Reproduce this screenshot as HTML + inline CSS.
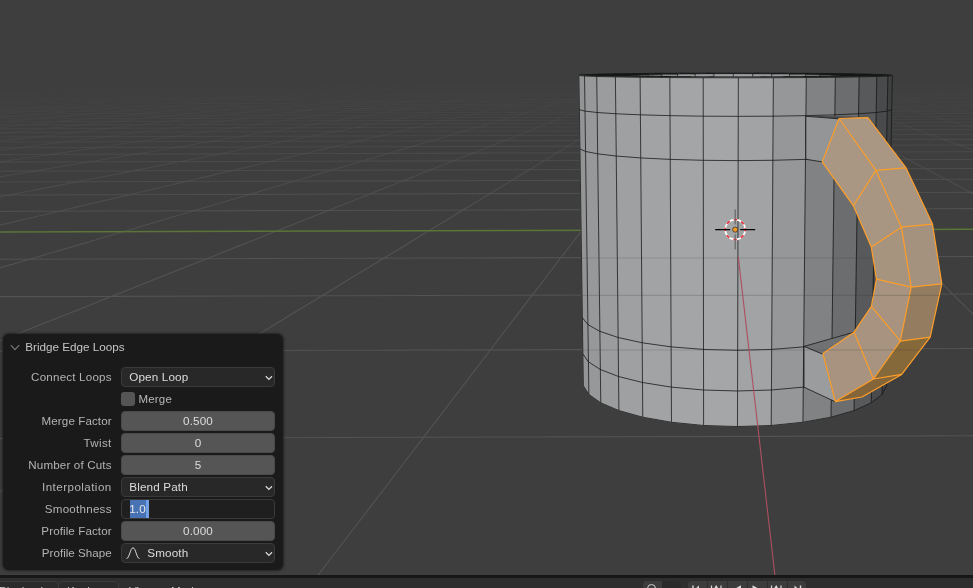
<!DOCTYPE html>
<html><head><meta charset="utf-8">
<style>
html,body{margin:0;padding:0;width:973px;height:588px;overflow:hidden;background:#3e3e3e;font-family:"Liberation Sans",sans-serif;}
#vp{position:absolute;left:0;top:0;width:973px;height:575px;background:#3e3e3e;overflow:hidden}
#panel{position:absolute;left:3px;top:334px;width:280px;height:236px;background:#1a1a1a;border-radius:6px;box-shadow:0 0 2.5px 0.5px rgba(0,0,0,0.45);will-change:transform;}
.t{position:absolute;white-space:nowrap;font-size:11.5px;color:#c4c4c4;line-height:14px}
.lab{position:absolute;right:171.3px;text-align:right;white-space:nowrap;font-size:11.6px;color:#b3b3b3;line-height:14px;letter-spacing:0.1px}
.w{position:absolute;left:118.2px;width:153.6px;height:19.4px;border-radius:4px;box-sizing:border-box}
.dd{background:#282828;border:1px solid #3a3a3a}
.num{background:#555555;border:1px solid #4a4a4a}
.wt{position:absolute;letter-spacing:0.15px;font-size:11.7px;color:#dcdcdc;line-height:14px;white-space:nowrap}
.chev{position:absolute;right:0px;top:5.5px;width:10px;height:8px}
#bar{position:absolute;left:0;top:574.8px;width:973px;height:13.2px;background:#2e2e2e;border-top:3.5px solid #171717;box-sizing:border-box;overflow:hidden;will-change:transform}
.bt{position:absolute;top:6.1px;font-size:11.7px;line-height:14px;color:#cccccc;white-space:nowrap}
</style></head><body>
<div id="vp"><svg width="973" height="575" viewBox="0 0 973 575" style="position:absolute;left:0;top:0"><g transform="translate(0 -0.8) rotate(-0.16 735.2 229.8)"><g stroke="#535353" stroke-width="1.1" fill="none"><path stroke-opacity="0.00" d="M-24.1 74.5L-2.4 74.5M-2.4 74.5L19.4 74.5M19.4 74.5L41.2 74.5M41.2 74.5L63.0 74.5M63.0 74.5L84.8 74.5M84.8 74.5L106.6 74.5M106.6 74.5L128.3 74.5M137.6 72.7L156.9 72.7M156.9 72.7L176.2 72.7M176.2 72.7L195.5 72.7M195.5 72.7L214.8 72.7M214.8 72.7L234.0 72.7M234.0 72.7L253.3 72.7M253.3 72.7L272.6 72.7M272.6 72.7L291.9 72.7M291.9 72.7L311.2 72.7M311.2 72.7L330.5 72.7M330.5 72.7L349.8 72.7M349.8 72.7L369.1 72.7M369.1 72.7L388.4 72.7M388.4 72.7L407.6 72.7M407.6 72.7L426.9 72.7M426.9 72.7L446.2 72.7M446.2 72.7L465.5 72.7M465.5 72.7L484.8 72.7M484.8 72.7L504.1 72.7M504.1 72.7L523.4 72.7M523.4 72.7L542.7 72.7M542.7 72.7L562.0 72.7M562.0 72.7L581.3 72.7M581.3 72.7L600.5 72.7M600.5 72.7L619.8 72.7M619.8 72.7L639.1 72.7M639.1 72.7L658.4 72.7M774.1 72.7L793.4 72.7M793.4 72.7L812.7 72.7M812.7 72.7L832.0 72.7M832.0 72.7L851.3 72.7M851.3 72.7L870.6 72.7M870.6 72.7L889.9 72.7M889.9 72.7L909.2 72.7M909.2 72.7L928.5 72.7M928.5 72.7L947.8 72.7M947.8 72.7L967.0 72.7M967.0 72.7L986.3 72.7M577.6 71.2L595.0 71.2M595.0 71.2L612.3 71.2M612.3 71.2L629.6 71.2M629.6 71.2L646.9 71.2M646.9 71.2L664.2 71.2M664.2 71.2L681.5 71.2M681.5 71.2L698.8 71.2M698.8 71.2L716.1 71.2M716.1 71.2L733.4 71.2M733.4 71.2L750.7 71.2M750.7 71.2L768.0 71.2M768.0 71.2L785.3 71.2M785.3 71.2L802.6 71.2M802.6 71.2L820.0 71.2M820.0 71.2L837.3 71.2M75.4 76.2L102.0 75.5M102.0 75.5L126.6 74.8M126.6 74.8L149.2 74.2M91.4 76.2L117.4 75.5M117.4 75.5L141.3 74.8M141.3 74.8L163.4 74.2M163.4 74.2L183.9 73.6M107.4 76.2L132.8 75.5M132.8 75.5L156.1 74.8M156.1 74.8L177.6 74.2M177.6 74.2L197.5 73.6M123.5 76.2L148.1 75.5M148.1 75.5L170.8 74.8M170.8 74.8L191.8 74.2M191.8 74.2L211.2 73.6M163.5 75.5L185.6 74.8M185.6 74.8L206.0 74.2M206.0 74.2L224.8 73.6M178.9 75.5L200.3 74.8M200.3 74.8L220.1 74.2M220.1 74.2L238.5 73.6M194.2 75.5L215.1 74.8M215.1 74.8L234.3 74.2M234.3 74.2L252.1 73.6M209.6 75.5L229.8 74.8M229.8 74.8L248.5 74.2M248.5 74.2L265.8 73.6M225.0 75.5L244.6 74.8M244.6 74.8L262.7 74.2M262.7 74.2L279.4 73.6M279.4 73.6L295.0 73.0M240.3 75.5L259.3 74.8M259.3 74.8L276.9 74.2M276.9 74.2L293.1 73.6M293.1 73.6L308.2 73.0M255.7 75.5L274.1 74.8M274.1 74.8L291.0 74.2M291.0 74.2L306.7 73.6M306.7 73.6L321.3 73.0M288.8 74.8L305.2 74.2M305.2 74.2L320.4 73.6M320.4 73.6L334.5 73.0M303.6 74.8L319.4 74.2M319.4 74.2L334.1 73.6M334.1 73.6L347.7 73.0M318.3 74.8L333.6 74.2M333.6 74.2L347.7 73.6M347.7 73.6L360.8 73.0M333.1 74.8L347.8 74.2M347.8 74.2L361.4 73.6M361.4 73.6L374.0 73.0M347.8 74.8L361.9 74.2M361.9 74.2L375.0 73.6M375.0 73.6L387.2 73.0M362.6 74.8L376.1 74.2M376.1 74.2L388.7 73.6M388.7 73.6L400.3 73.0M377.3 74.8L390.3 74.2M390.3 74.2L402.3 73.6M402.3 73.6L413.5 73.0M413.5 73.0L423.9 72.5M392.1 74.8L404.5 74.2M404.5 74.2L416.0 73.6M416.0 73.6L426.7 73.0M426.7 73.0L436.6 72.5M406.8 74.8L418.7 74.2M418.7 74.2L429.6 73.6M429.6 73.6L439.8 73.0M439.8 73.0L449.3 72.5M432.8 74.2L443.3 73.6M443.3 73.6L453.0 73.0M453.0 73.0L462.0 72.5M447.0 74.2L456.9 73.6M456.9 73.6L466.2 73.0M466.2 73.0L474.7 72.5M461.2 74.2L470.6 73.6M470.6 73.6L479.3 73.0M479.3 73.0L487.5 72.5M475.4 74.2L484.3 73.6M484.3 73.6L492.5 73.0M492.5 73.0L500.2 72.5M489.6 74.2L497.9 73.6M497.9 73.6L505.7 73.0M505.7 73.0L512.9 72.5M503.7 74.2L511.6 73.6M511.6 73.6L518.8 73.0M518.8 73.0L525.6 72.5M517.9 74.2L525.2 73.6M525.2 73.6L532.0 73.0M532.0 73.0L538.3 72.5M532.1 74.2L538.9 73.6M538.9 73.6L545.2 73.0M545.2 73.0L551.0 72.5M546.3 74.2L552.5 73.6M552.5 73.6L558.3 73.0M558.3 73.0L563.7 72.5M560.5 74.2L566.2 73.6M566.2 73.6L571.5 73.0M571.5 73.0L576.4 72.5M574.6 74.2L579.8 73.6M579.8 73.6L584.7 73.0M584.7 73.0L589.1 72.5M588.8 74.2L593.5 73.6M593.5 73.6L597.8 73.0M597.8 73.0L601.9 72.5M603.0 74.2L607.1 73.6M607.1 73.6L611.0 73.0M611.0 73.0L614.6 72.5M617.2 74.2L620.8 73.6M620.8 73.6L624.2 73.0M624.2 73.0L627.3 72.5M631.4 74.2L634.5 73.6M634.5 73.6L637.3 73.0M637.3 73.0L640.0 72.5M645.6 74.2L648.1 73.6M648.1 73.6L650.5 73.0M650.5 73.0L652.7 72.5M659.7 74.2L661.8 73.6M661.8 73.6L663.7 73.0M663.7 73.0L665.4 72.5M673.9 74.2L675.4 73.6M675.4 73.6L676.8 73.0M676.8 73.0L678.1 72.5M688.1 74.2L689.1 73.6M689.1 73.6L690.0 73.0M690.0 73.0L690.8 72.5M702.3 74.2L702.7 73.6M702.7 73.6L703.2 73.0M703.2 73.0L703.5 72.5M730.6 74.2L730.0 73.6M730.0 73.6L729.5 73.0M729.5 73.0L729.0 72.5M744.8 74.2L743.7 73.6M743.7 73.6L742.7 73.0M742.7 73.0L741.7 72.5M759.0 74.2L757.3 73.6M757.3 73.6L755.8 73.0M755.8 73.0L754.4 72.5M773.2 74.2L771.0 73.6M771.0 73.6L769.0 73.0M769.0 73.0L767.1 72.5M787.4 74.2L784.7 73.6M784.7 73.6L782.2 73.0M782.2 73.0L779.8 72.5M801.5 74.2L798.3 73.6M798.3 73.6L795.3 73.0M795.3 73.0L792.5 72.5M815.7 74.2L812.0 73.6M812.0 73.6L808.5 73.0M808.5 73.0L805.2 72.5M829.9 74.2L825.6 73.6M825.6 73.6L821.7 73.0M821.7 73.0L818.0 72.5M844.1 74.2L839.3 73.6M839.3 73.6L834.8 73.0M834.8 73.0L830.7 72.5M858.3 74.2L852.9 73.6M852.9 73.6L848.0 73.0M848.0 73.0L843.4 72.5M872.4 74.2L866.6 73.6M866.6 73.6L861.1 73.0M861.1 73.0L856.1 72.5M886.6 74.2L880.2 73.6M880.2 73.6L874.3 73.0M874.3 73.0L868.8 72.5M900.8 74.2L893.9 73.6M893.9 73.6L887.5 73.0M887.5 73.0L881.5 72.5M915.0 74.2L907.5 73.6M907.5 73.6L900.6 73.0M900.6 73.0L894.2 72.5M929.2 74.2L921.2 73.6M921.2 73.6L913.8 73.0M913.8 73.0L906.9 72.5M943.3 74.2L934.9 73.6M934.9 73.6L927.0 73.0M927.0 73.0L919.6 72.5M957.5 74.2L948.5 73.6M948.5 73.6L940.1 73.0M940.1 73.0L932.4 72.5M971.7 74.2L962.2 73.6M962.2 73.6L953.3 73.0M953.3 73.0L945.1 72.5M985.9 74.2L975.8 73.6M975.8 73.6L966.5 73.0M966.5 73.0L957.8 72.5M979.6 73.0L970.5 72.5"/><path stroke-opacity="0.05" d="M-8.7 77.0L16.3 77.0M16.3 77.0L41.3 77.0M41.3 77.0L66.3 77.0M66.3 77.0L91.3 77.0M91.3 77.0L116.3 77.0M116.3 77.0L141.4 77.0M141.4 77.0L166.4 77.0M166.4 77.0L191.4 77.0M191.4 77.0L216.4 77.0M216.4 77.0L241.4 77.0M241.4 77.0L266.5 77.0M266.5 77.0L291.5 77.0M291.5 77.0L316.5 77.0M316.5 77.0L341.5 77.0M341.5 77.0L366.5 77.0M366.5 77.0L391.5 77.0M391.5 77.0L416.6 77.0M416.6 77.0L441.6 77.0M441.6 77.0L466.6 77.0M466.6 77.0L491.6 77.0M491.6 77.0L516.6 77.0M516.6 77.0L541.7 77.0M541.7 77.0L566.7 77.0M566.7 77.0L591.7 77.0M591.7 77.0L616.7 77.0M616.7 77.0L641.7 77.0M641.7 77.0L666.7 77.0M666.7 77.0L691.8 77.0M691.8 77.0L716.8 77.0M716.8 77.0L741.8 77.0M741.8 77.0L766.8 77.0M766.8 77.0L791.8 77.0M791.8 77.0L816.9 77.0M816.9 77.0L841.9 77.0M841.9 77.0L866.9 77.0M866.9 77.0L891.9 77.0M891.9 77.0L916.9 77.0M916.9 77.0L941.9 77.0M941.9 77.0L967.0 77.0M967.0 77.0L992.0 77.0M-19.6 77.3L5.8 77.3M5.8 77.3L31.1 77.3M31.1 77.3L56.5 77.3M56.5 77.3L81.9 77.3M81.9 77.3L107.3 77.3M107.3 77.3L132.7 77.3M132.7 77.3L158.1 77.3M158.1 77.3L183.5 77.3M183.5 77.3L208.9 77.3M208.9 77.3L234.3 77.3M234.3 77.3L259.7 77.3M259.7 77.3L285.1 77.3M285.1 77.3L310.5 77.3M310.5 77.3L335.9 77.3M335.9 77.3L361.3 77.3M361.3 77.3L386.7 77.3M386.7 77.3L412.1 77.3M412.1 77.3L437.5 77.3M437.5 77.3L462.9 77.3M462.9 77.3L488.3 77.3M488.3 77.3L513.7 77.3M513.7 77.3L539.0 77.3M539.0 77.3L564.4 77.3M564.4 77.3L589.8 77.3M589.8 77.3L615.2 77.3M615.2 77.3L640.6 77.3M640.6 77.3L666.0 77.3M666.0 77.3L691.4 77.3M691.4 77.3L716.8 77.3M716.8 77.3L742.2 77.3M742.2 77.3L767.6 77.3M767.6 77.3L793.0 77.3M793.0 77.3L818.4 77.3M818.4 77.3L843.8 77.3M843.8 77.3L869.2 77.3M869.2 77.3L894.6 77.3M894.6 77.3L920.0 77.3M920.0 77.3L945.4 77.3M945.4 77.3L970.8 77.3M970.8 77.3L996.2 77.3M-5.1 77.6L20.7 77.6M20.7 77.6L46.5 77.6M46.5 77.6L72.3 77.6M72.3 77.6L98.0 77.6M98.0 77.6L123.8 77.6M123.8 77.6L149.6 77.6M149.6 77.6L175.4 77.6M175.4 77.6L201.2 77.6M201.2 77.6L227.0 77.6M227.0 77.6L252.7 77.6M252.7 77.6L278.5 77.6M278.5 77.6L304.3 77.6M304.3 77.6L330.1 77.6M330.1 77.6L355.9 77.6M355.9 77.6L381.7 77.6M381.7 77.6L407.4 77.6M407.4 77.6L433.2 77.6M433.2 77.6L459.0 77.6M459.0 77.6L484.8 77.6M484.8 77.6L510.6 77.6M510.6 77.6L536.4 77.6M536.4 77.6L562.1 77.6M562.1 77.6L587.9 77.6M587.9 77.6L613.7 77.6M613.7 77.6L639.5 77.6M639.5 77.6L665.3 77.6M665.3 77.6L691.1 77.6M691.1 77.6L716.9 77.6M716.9 77.6L742.6 77.6M742.6 77.6L768.4 77.6M768.4 77.6L794.2 77.6M794.2 77.6L820.0 77.6M820.0 77.6L845.8 77.6M845.8 77.6L871.6 77.6M871.6 77.6L897.3 77.6M897.3 77.6L923.1 77.6M923.1 77.6L948.9 77.6M948.9 77.6L974.7 77.6M974.7 77.6L1000.5 77.6M-16.3 77.9L9.9 77.9M9.9 77.9L36.1 77.9M36.1 77.9L62.3 77.9M62.3 77.9L88.5 77.9M88.5 77.9L114.6 77.9M114.6 77.9L140.8 77.9M140.8 77.9L167.0 77.9M167.0 77.9L193.2 77.9M193.2 77.9L219.4 77.9M219.4 77.9L245.6 77.9M245.6 77.9L271.7 77.9M271.7 77.9L297.9 77.9M297.9 77.9L324.1 77.9M324.1 77.9L350.3 77.9M350.3 77.9L376.5 77.9M376.5 77.9L402.7 77.9M402.7 77.9L428.9 77.9M428.9 77.9L455.0 77.9M455.0 77.9L481.2 77.9M481.2 77.9L507.4 77.9M507.4 77.9L533.6 77.9M533.6 77.9L559.8 77.9M559.8 77.9L586.0 77.9M586.0 77.9L612.1 77.9M612.1 77.9L638.3 77.9M638.3 77.9L664.5 77.9M664.5 77.9L690.7 77.9M690.7 77.9L716.9 77.9M716.9 77.9L743.1 77.9M743.1 77.9L769.3 77.9M769.3 77.9L795.4 77.9M795.4 77.9L821.6 77.9M821.6 77.9L847.8 77.9M847.8 77.9L874.0 77.9M874.0 77.9L900.2 77.9M900.2 77.9L926.4 77.9M926.4 77.9L952.5 77.9M952.5 77.9L978.7 77.9M-27.8 78.2L-1.2 78.2M-1.2 78.2L25.4 78.2M25.4 78.2L52.0 78.2M52.0 78.2L78.6 78.2M78.6 78.2L105.2 78.2M105.2 78.2L131.8 78.2M131.8 78.2L158.4 78.2M158.4 78.2L185.0 78.2M185.0 78.2L211.6 78.2M211.6 78.2L238.2 78.2M238.2 78.2L264.8 78.2M264.8 78.2L291.4 78.2M291.4 78.2L318.0 78.2M318.0 78.2L344.6 78.2M344.6 78.2L371.1 78.2M371.1 78.2L397.7 78.2M397.7 78.2L424.3 78.2M424.3 78.2L450.9 78.2M450.9 78.2L477.5 78.2M477.5 78.2L504.1 78.2M504.1 78.2L530.7 78.2M530.7 78.2L557.3 78.2M557.3 78.2L583.9 78.2M583.9 78.2L610.5 78.2M610.5 78.2L637.1 78.2M637.1 78.2L663.7 78.2M663.7 78.2L690.3 78.2M690.3 78.2L716.9 78.2M716.9 78.2L743.5 78.2M743.5 78.2L770.1 78.2M770.1 78.2L796.7 78.2M796.7 78.2L823.3 78.2M823.3 78.2L849.9 78.2M849.9 78.2L876.5 78.2M876.5 78.2L903.1 78.2M903.1 78.2L929.7 78.2M929.7 78.2L956.3 78.2M956.3 78.2L982.9 78.2M-12.7 78.5L14.3 78.5M14.3 78.5L41.3 78.5M41.3 78.5L68.4 78.5M68.4 78.5L95.4 78.5M95.4 78.5L122.4 78.5M122.4 78.5L149.4 78.5M149.4 78.5L176.5 78.5M176.5 78.5L203.5 78.5M203.5 78.5L230.5 78.5M230.5 78.5L257.5 78.5M257.5 78.5L284.6 78.5M284.6 78.5L311.6 78.5M311.6 78.5L338.6 78.5M338.6 78.5L365.6 78.5M365.6 78.5L392.7 78.5M392.7 78.5L419.7 78.5M419.7 78.5L446.7 78.5M446.7 78.5L473.7 78.5M473.7 78.5L500.8 78.5M500.8 78.5L527.8 78.5M527.8 78.5L554.8 78.5M554.8 78.5L581.8 78.5M581.8 78.5L608.9 78.5M608.9 78.5L635.9 78.5M635.9 78.5L662.9 78.5M662.9 78.5L689.9 78.5M689.9 78.5L717.0 78.5M717.0 78.5L744.0 78.5M744.0 78.5L771.0 78.5M771.0 78.5L798.0 78.5M798.0 78.5L825.1 78.5M825.1 78.5L852.1 78.5M852.1 78.5L879.1 78.5M879.1 78.5L906.1 78.5M906.1 78.5L933.2 78.5M933.2 78.5L960.2 78.5M960.2 78.5L987.2 78.5M-24.6 78.8L2.9 78.8M2.9 78.8L30.4 78.8M30.4 78.8L57.8 78.8M57.8 78.8L85.3 78.8M85.3 78.8L112.8 78.8M112.8 78.8L140.2 78.8M140.2 78.8L167.7 78.8M167.7 78.8L195.2 78.8M195.2 78.8L222.6 78.8M222.6 78.8L250.1 78.8M250.1 78.8L277.6 78.8M277.6 78.8L305.0 78.8M305.0 78.8L332.5 78.8M332.5 78.8L360.0 78.8M360.0 78.8L387.4 78.8M387.4 78.8L414.9 78.8M414.9 78.8L442.3 78.8M442.3 78.8L469.8 78.8M469.8 78.8L497.3 78.8M497.3 78.8L524.7 78.8M524.7 78.8L552.2 78.8M552.2 78.8L579.7 78.8M579.7 78.8L607.1 78.8M607.1 78.8L634.6 78.8M634.6 78.8L662.1 78.8M662.1 78.8L689.5 78.8M689.5 78.8L717.0 78.8M717.0 78.8L744.5 78.8M744.5 78.8L771.9 78.8M771.9 78.8L799.4 78.8M799.4 78.8L826.9 78.8M826.9 78.8L854.3 78.8M854.3 78.8L881.8 78.8M881.8 78.8L909.3 78.8M909.3 78.8L936.7 78.8M936.7 78.8L964.2 78.8M964.2 78.8L991.6 78.8M-8.9 79.2L19.0 79.2M19.0 79.2L47.0 79.2M47.0 79.2L74.9 79.2M74.9 79.2L102.8 79.2M102.8 79.2L130.7 79.2M130.7 79.2L158.6 79.2M158.6 79.2L186.6 79.2M186.6 79.2L214.5 79.2M214.5 79.2L242.4 79.2M242.4 79.2L270.3 79.2M270.3 79.2L298.2 79.2M298.2 79.2L326.2 79.2M326.2 79.2L354.1 79.2M354.1 79.2L382.0 79.2M382.0 79.2L409.9 79.2M409.9 79.2L437.8 79.2M437.8 79.2L465.8 79.2M465.8 79.2L493.7 79.2M493.7 79.2L521.6 79.2M521.6 79.2L549.5 79.2M549.5 79.2L577.4 79.2M577.4 79.2L605.4 79.2M605.4 79.2L633.3 79.2M633.3 79.2L661.2 79.2M661.2 79.2L689.1 79.2M689.1 79.2L717.0 79.2M717.0 79.2L745.0 79.2M745.0 79.2L772.9 79.2M772.9 79.2L800.8 79.2M800.8 79.2L828.7 79.2M828.7 79.2L856.6 79.2M856.6 79.2L884.6 79.2M884.6 79.2L912.5 79.2M912.5 79.2L940.4 79.2M940.4 79.2L968.3 79.2M968.3 79.2L996.2 79.2M-21.1 79.5L7.3 79.5M7.3 79.5L35.7 79.5M35.7 79.5L64.1 79.5M64.1 79.5L92.5 79.5M92.5 79.5L120.9 79.5M120.9 79.5L149.3 79.5M149.3 79.5L177.7 79.5M177.7 79.5L206.0 79.5M206.0 79.5L234.4 79.5M234.4 79.5L262.8 79.5M262.8 79.5L291.2 79.5M291.2 79.5L319.6 79.5M319.6 79.5L348.0 79.5M348.0 79.5L376.4 79.5M376.4 79.5L404.8 79.5M404.8 79.5L433.2 79.5M433.2 79.5L461.6 79.5M461.6 79.5L490.0 79.5M490.0 79.5L518.3 79.5M518.3 79.5L546.7 79.5M546.7 79.5L575.1 79.5M575.1 79.5L603.5 79.5M603.5 79.5L631.9 79.5M631.9 79.5L660.3 79.5M660.3 79.5L688.7 79.5M688.7 79.5L717.1 79.5M717.1 79.5L745.5 79.5M745.5 79.5L773.9 79.5M773.9 79.5L802.3 79.5M802.3 79.5L830.6 79.5M830.6 79.5L859.0 79.5M859.0 79.5L887.4 79.5M887.4 79.5L915.8 79.5M915.8 79.5L944.2 79.5M944.2 79.5L972.6 79.5M972.6 79.5L1001.0 79.5M-33.7 79.9L-4.8 79.9M-4.8 79.9L24.1 79.9M24.1 79.9L52.9 79.9M52.9 79.9L81.8 79.9M81.8 79.9L110.7 79.9M110.7 79.9L139.6 79.9M139.6 79.9L168.5 79.9M168.5 79.9L197.3 79.9M197.3 79.9L226.2 79.9M226.2 79.9L255.1 79.9M255.1 79.9L284.0 79.9M284.0 79.9L312.8 79.9M312.8 79.9L341.7 79.9M341.7 79.9L370.6 79.9M370.6 79.9L399.5 79.9M399.5 79.9L428.3 79.9M428.3 79.9L457.2 79.9M457.2 79.9L486.1 79.9M486.1 79.9L515.0 79.9M515.0 79.9L543.9 79.9M543.9 79.9L572.7 79.9M572.7 79.9L601.6 79.9M601.6 79.9L630.5 79.9M630.5 79.9L659.4 79.9M659.4 79.9L688.2 79.9M688.2 79.9L717.1 79.9M717.1 79.9L746.0 79.9M746.0 79.9L774.9 79.9M774.9 79.9L803.8 79.9M803.8 79.9L832.6 79.9M832.6 79.9L861.5 79.9M861.5 79.9L890.4 79.9M890.4 79.9L919.3 79.9M919.3 79.9L948.1 79.9M948.1 79.9L977.0 79.9M977.0 79.9L1005.9 79.9M-17.4 80.3L12.0 80.3M12.0 80.3L41.4 80.3M41.4 80.3L70.8 80.3M70.8 80.3L100.2 80.3M100.2 80.3L129.5 80.3M129.5 80.3L158.9 80.3M158.9 80.3L188.3 80.3M188.3 80.3L217.7 80.3M217.7 80.3L247.1 80.3M247.1 80.3L276.5 80.3M276.5 80.3L305.8 80.3M305.8 80.3L335.2 80.3M335.2 80.3L364.6 80.3M364.6 80.3L394.0 80.3M394.0 80.3L423.4 80.3M423.4 80.3L452.7 80.3M452.7 80.3L482.1 80.3M482.1 80.3L511.5 80.3M511.5 80.3L540.9 80.3M540.9 80.3L570.3 80.3M570.3 80.3L599.6 80.3M599.6 80.3L629.0 80.3M629.0 80.3L658.4 80.3M658.4 80.3L687.8 80.3M687.8 80.3L717.2 80.3M717.2 80.3L746.5 80.3M746.5 80.3L775.9 80.3M775.9 80.3L805.3 80.3M805.3 80.3L834.7 80.3M834.7 80.3L864.1 80.3M864.1 80.3L893.5 80.3M893.5 80.3L922.8 80.3M922.8 80.3L952.2 80.3M952.2 80.3L981.6 80.3M-30.3 80.7L-0.4 80.7M-0.4 80.7L29.5 80.7M29.5 80.7L59.4 80.7M59.4 80.7L89.3 80.7M89.3 80.7L119.2 80.7M119.2 80.7L149.1 80.7M149.1 80.7L179.0 80.7M179.0 80.7L208.9 80.7M208.9 80.7L238.8 80.7M238.8 80.7L268.7 80.7M268.7 80.7L298.6 80.7M298.6 80.7L328.5 80.7M328.5 80.7L358.4 80.7M358.4 80.7L388.3 80.7M388.3 80.7L418.2 80.7M418.2 80.7L448.1 80.7M448.1 80.7L478.0 80.7M478.0 80.7L507.9 80.7M507.9 80.7L537.8 80.7M537.8 80.7L567.7 80.7M567.7 80.7L597.6 80.7M597.6 80.7L627.5 80.7M627.5 80.7L657.4 80.7M657.4 80.7L687.3 80.7M687.3 80.7L717.2 80.7M717.2 80.7L747.1 80.7M747.1 80.7L777.0 80.7M777.0 80.7L806.9 80.7M806.9 80.7L836.8 80.7M836.8 80.7L866.7 80.7M866.7 80.7L896.6 80.7M896.6 80.7L926.5 80.7M926.5 80.7L956.4 80.7M956.4 80.7L986.3 80.7M-13.4 81.1L17.1 81.1M17.1 81.1L47.5 81.1M47.5 81.1L78.0 81.1M78.0 81.1L108.4 81.1M108.4 81.1L138.8 81.1M138.8 81.1L169.3 81.1M169.3 81.1L199.7 81.1M199.7 81.1L230.2 81.1M230.2 81.1L260.6 81.1M260.6 81.1L291.1 81.1M291.1 81.1L321.5 81.1M321.5 81.1L351.9 81.1M351.9 81.1L382.4 81.1M382.4 81.1L412.8 81.1M412.8 81.1L443.3 81.1M443.3 81.1L473.7 81.1M473.7 81.1L504.2 81.1M504.2 81.1L534.6 81.1M534.6 81.1L565.0 81.1M565.0 81.1L595.5 81.1M595.5 81.1L625.9 81.1M625.9 81.1L656.4 81.1M656.4 81.1L686.8 81.1M686.8 81.1L717.3 81.1M717.3 81.1L747.7 81.1M747.7 81.1L778.1 81.1M778.1 81.1L808.6 81.1M808.6 81.1L839.0 81.1M839.0 81.1L869.5 81.1M869.5 81.1L899.9 81.1M899.9 81.1L930.4 81.1M930.4 81.1L960.8 81.1M960.8 81.1L991.2 81.1M-26.8 81.5L4.2 81.5M4.2 81.5L35.2 81.5M35.2 81.5L66.2 81.5M66.2 81.5L97.3 81.5M97.3 81.5L128.3 81.5M128.3 81.5L159.3 81.5M159.3 81.5L190.3 81.5M190.3 81.5L221.3 81.5M221.3 81.5L252.3 81.5M252.3 81.5L283.3 81.5M283.3 81.5L314.3 81.5M314.3 81.5L345.3 81.5M345.3 81.5L376.3 81.5M376.3 81.5L407.3 81.5M407.3 81.5L438.3 81.5M438.3 81.5L469.3 81.5M469.3 81.5L500.3 81.5M500.3 81.5L531.3 81.5M531.3 81.5L562.3 81.5M562.3 81.5L593.3 81.5M593.3 81.5L624.3 81.5M624.3 81.5L655.3 81.5M655.3 81.5L686.3 81.5M686.3 81.5L717.3 81.5M717.3 81.5L748.3 81.5M748.3 81.5L779.3 81.5M779.3 81.5L810.3 81.5M810.3 81.5L841.3 81.5M841.3 81.5L872.3 81.5M872.3 81.5L903.3 81.5M903.3 81.5L934.3 81.5M934.3 81.5L965.3 81.5M965.3 81.5L996.3 81.5M-9.1 81.9L22.5 81.9M22.5 81.9L54.1 81.9M54.1 81.9L85.7 81.9M85.7 81.9L117.3 81.9M117.3 81.9L148.8 81.9M148.8 81.9L180.4 81.9M180.4 81.9L212.0 81.9M212.0 81.9L243.6 81.9M243.6 81.9L275.2 81.9M275.2 81.9L306.8 81.9M306.8 81.9L338.4 81.9M338.4 81.9L369.9 81.9M369.9 81.9L401.5 81.9M401.5 81.9L433.1 81.9M433.1 81.9L464.7 81.9M464.7 81.9L496.3 81.9M496.3 81.9L527.9 81.9M527.9 81.9L559.4 81.9M559.4 81.9L591.0 81.9M591.0 81.9L622.6 81.9M622.6 81.9L654.2 81.9M654.2 81.9L685.8 81.9M685.8 81.9L717.4 81.9M717.4 81.9L748.9 81.9M748.9 81.9L780.5 81.9M780.5 81.9L812.1 81.9M812.1 81.9L843.7 81.9M843.7 81.9L875.3 81.9M875.3 81.9L906.9 81.9M906.9 81.9L938.4 81.9M938.4 81.9L970.0 81.9M970.0 81.9L1001.6 81.9M-22.9 82.4L9.3 82.4M9.3 82.4L41.5 82.4M41.5 82.4L73.7 82.4M73.7 82.4L105.9 82.4M105.9 82.4L138.0 82.4M138.0 82.4L170.2 82.4M170.2 82.4L202.4 82.4M202.4 82.4L234.6 82.4M234.6 82.4L266.8 82.4M266.8 82.4L299.0 82.4M299.0 82.4L331.2 82.4M331.2 82.4L363.4 82.4M363.4 82.4L395.5 82.4M395.5 82.4L427.7 82.4M427.7 82.4L459.9 82.4M459.9 82.4L492.1 82.4M492.1 82.4L524.3 82.4M524.3 82.4L556.5 82.4M556.5 82.4L588.7 82.4M588.7 82.4L620.9 82.4M620.9 82.4L653.0 82.4M653.0 82.4L685.2 82.4M685.2 82.4L717.4 82.4M717.4 82.4L749.6 82.4M749.6 82.4L781.8 82.4M781.8 82.4L814.0 82.4M814.0 82.4L846.2 82.4M846.2 82.4L878.3 82.4M878.3 82.4L910.5 82.4M910.5 82.4L942.7 82.4M942.7 82.4L974.9 82.4M974.9 82.4L1007.1 82.4M-37.3 82.8L-4.4 82.8M-4.4 82.8L28.4 82.8M28.4 82.8L61.2 82.8M61.2 82.8L94.0 82.8M94.0 82.8L126.8 82.8M126.8 82.8L159.6 82.8M159.6 82.8L192.4 82.8M192.4 82.8L225.3 82.8M225.3 82.8L258.1 82.8M258.1 82.8L290.9 82.8M290.9 82.8L323.7 82.8M323.7 82.8L356.5 82.8M356.5 82.8L389.3 82.8M389.3 82.8L422.1 82.8M422.1 82.8L455.0 82.8M455.0 82.8L487.8 82.8M487.8 82.8L520.6 82.8M520.6 82.8L553.4 82.8M553.4 82.8L586.2 82.8M586.2 82.8L619.0 82.8M619.0 82.8L651.8 82.8M651.8 82.8L684.7 82.8M684.7 82.8L717.5 82.8M717.5 82.8L750.3 82.8M750.3 82.8L783.1 82.8M783.1 82.8L815.9 82.8M815.9 82.8L848.7 82.8M848.7 82.8L881.5 82.8M881.5 82.8L914.4 82.8M914.4 82.8L947.2 82.8M947.2 82.8L980.0 82.8M-18.7 83.3L14.7 83.3M14.7 83.3L48.2 83.3M48.2 83.3L81.7 83.3M81.7 83.3L115.1 83.3M115.1 83.3L148.6 83.3M148.6 83.3L182.1 83.3M182.1 83.3L215.5 83.3M215.5 83.3L249.0 83.3M249.0 83.3L282.5 83.3M282.5 83.3L315.9 83.3M315.9 83.3L349.4 83.3M349.4 83.3L382.9 83.3M382.9 83.3L416.3 83.3M416.3 83.3L449.8 83.3M449.8 83.3L483.3 83.3M483.3 83.3L516.7 83.3M516.7 83.3L550.2 83.3M550.2 83.3L583.7 83.3M583.7 83.3L617.1 83.3M617.1 83.3L650.6 83.3M650.6 83.3L684.1 83.3M684.1 83.3L717.5 83.3M717.5 83.3L751.0 83.3M751.0 83.3L784.5 83.3M784.5 83.3L817.9 83.3M817.9 83.3L851.4 83.3M851.4 83.3L884.9 83.3M884.9 83.3L918.3 83.3M918.3 83.3L951.8 83.3M951.8 83.3L985.3 83.3M-33.6 83.8L0.6 83.8M0.6 83.8L34.7 83.8M34.7 83.8L68.8 83.8M68.8 83.8L103.0 83.8M103.0 83.8L137.1 83.8M137.1 83.8L171.3 83.8M171.3 83.8L205.4 83.8M205.4 83.8L239.6 83.8M239.6 83.8L273.7 83.8M273.7 83.8L307.9 83.8M307.9 83.8L342.0 83.8M342.0 83.8L376.1 83.8M376.1 83.8L410.3 83.8M410.3 83.8L444.4 83.8M444.4 83.8L478.6 83.8M478.6 83.8L512.7 83.8M512.7 83.8L546.9 83.8M546.9 83.8L581.0 83.8M581.0 83.8L615.2 83.8M820.0 83.8L854.2 83.8M854.2 83.8L888.3 83.8M888.3 83.8L922.5 83.8M922.5 83.8L956.6 83.8M956.6 83.8L990.7 83.8M-14.2 84.4L20.6 84.4M20.6 84.4L55.5 84.4M55.5 84.4L90.3 84.4M90.3 84.4L125.2 84.4M125.2 84.4L160.0 84.4M160.0 84.4L194.9 84.4M194.9 84.4L229.7 84.4M229.7 84.4L264.6 84.4M264.6 84.4L299.4 84.4M299.4 84.4L334.3 84.4M334.3 84.4L369.1 84.4M369.1 84.4L404.0 84.4M404.0 84.4L438.8 84.4M438.8 84.4L473.7 84.4M961.6 84.4L996.5 84.4M-29.6 84.9L6.0 84.9M6.0 84.9L41.6 84.9M41.6 84.9L77.2 84.9M77.2 84.9L112.7 84.9M112.7 84.9L148.3 84.9M148.3 84.9L183.9 84.9M183.9 84.9L219.5 84.9M219.5 84.9L255.1 84.9M255.1 84.9L290.7 84.9M290.7 84.9L326.3 84.9M326.3 84.9L361.8 84.9M-9.3 85.5L27.0 85.5M27.0 85.5L63.4 85.5M63.4 85.5L99.8 85.5M99.8 85.5L136.1 85.5M136.1 85.5L172.5 85.5M172.5 85.5L208.8 85.5M208.8 85.5L245.2 85.5M245.2 85.5L281.5 85.5M-25.3 86.1L11.9 86.1M11.9 86.1L49.0 86.1M49.0 86.1L86.2 86.1M86.2 86.1L123.3 86.1M123.3 86.1L160.5 86.1M160.5 86.1L197.7 86.1M197.7 86.1L234.8 86.1M-42.0 86.7L-4.0 86.7M-4.0 86.7L34.0 86.7M34.0 86.7L72.0 86.7M72.0 86.7L110.0 86.7M110.0 86.7L148.0 86.7M-20.5 87.4L18.3 87.4M18.3 87.4L57.2 87.4M57.2 87.4L96.1 87.4M-37.9 88.1L1.9 88.1M1.9 88.1L41.7 88.1M128.3 74.5L150.1 74.5M150.1 74.5L171.9 74.5M171.9 74.5L193.7 74.5M193.7 74.5L215.5 74.5M215.5 74.5L237.3 74.5M237.3 74.5L259.0 74.5M259.0 74.5L280.8 74.5M280.8 74.5L302.6 74.5M302.6 74.5L324.4 74.5M324.4 74.5L346.2 74.5M346.2 74.5L368.0 74.5M368.0 74.5L389.7 74.5M389.7 74.5L411.5 74.5M411.5 74.5L433.3 74.5M433.3 74.5L455.1 74.5M455.1 74.5L476.9 74.5M476.9 74.5L498.7 74.5M498.7 74.5L520.4 74.5M520.4 74.5L542.2 74.5M542.2 74.5L564.0 74.5M564.0 74.5L585.8 74.5M585.8 74.5L607.6 74.5M607.6 74.5L629.4 74.5M629.4 74.5L651.1 74.5M651.1 74.5L672.9 74.5M672.9 74.5L694.7 74.5M694.7 74.5L716.5 74.5M716.5 74.5L738.3 74.5M738.3 74.5L760.1 74.5M760.1 74.5L781.8 74.5M781.8 74.5L803.6 74.5M803.6 74.5L825.4 74.5M825.4 74.5L847.2 74.5M847.2 74.5L869.0 74.5M869.0 74.5L890.8 74.5M890.8 74.5L912.6 74.5M912.6 74.5L934.3 74.5M934.3 74.5L956.1 74.5M956.1 74.5L977.9 74.5M977.9 74.5L999.7 74.5M658.4 72.7L677.7 72.7M677.7 72.7L697.0 72.7M697.0 72.7L716.3 72.7M716.3 72.7L735.6 72.7M735.6 72.7L754.9 72.7M754.9 72.7L774.1 72.7M-20.7 79.0L14.4 78.0M14.4 78.0L46.3 77.1M46.3 77.1L75.4 76.2M-40.0 80.1L-2.2 79.0M-2.2 79.0L32.0 78.0M32.0 78.0L63.0 77.1M63.0 77.1L91.4 76.2M-20.6 80.1L16.2 79.0M16.2 79.0L49.5 78.0M49.5 78.0L79.8 77.1M79.8 77.1L107.4 76.2M-41.1 81.3L-1.2 80.1M-1.2 80.1L34.6 79.0M34.6 79.0L67.1 78.0M67.1 78.0L96.6 77.1M96.6 77.1L123.5 76.2M-20.6 81.3L18.2 80.1M18.2 80.1L53.1 79.0M53.1 79.0L84.6 78.0M84.6 78.0L113.3 77.1M113.3 77.1L139.5 76.2M139.5 76.2L163.5 75.5M-42.2 82.7L-0.1 81.3M-0.1 81.3L37.6 80.1M37.6 80.1L71.5 79.0M71.5 79.0L102.2 78.0M102.2 78.0L130.1 77.1M130.1 77.1L155.5 76.2M155.5 76.2L178.9 75.5M-20.5 82.7L20.4 81.3M20.4 81.3L57.0 80.1M57.0 80.1L90.0 79.0M90.0 79.0L119.8 78.0M119.8 78.0L146.8 77.1M146.8 77.1L171.6 76.2M171.6 76.2L194.2 75.5M-43.5 84.2L1.2 82.7M1.2 82.7L40.9 81.3M40.9 81.3L76.4 80.1M76.4 80.1L108.4 79.0M108.4 79.0L137.3 78.0M137.3 78.0L163.6 77.1M163.6 77.1L187.6 76.2M187.6 76.2L209.6 75.5M-20.4 84.2L22.9 82.7M22.9 82.7L61.4 81.3M61.4 81.3L95.9 80.1M95.9 80.1L126.9 79.0M126.9 79.0L154.9 78.0M154.9 78.0L180.4 77.1M180.4 77.1L203.6 76.2M203.6 76.2L225.0 75.5M-44.9 85.9L2.6 84.2M2.6 84.2L44.6 82.7M44.6 82.7L81.9 81.3M81.9 81.3L115.3 80.1M115.3 80.1L145.3 79.0M145.3 79.0L172.5 78.0M172.5 78.0L197.1 77.1M197.1 77.1L219.7 76.2M219.7 76.2L240.3 75.5M-20.3 85.9L25.7 84.2M25.7 84.2L66.3 82.7M66.3 82.7L102.4 81.3M102.4 81.3L134.7 80.1M134.7 80.1L163.7 79.0M163.7 79.0L190.0 78.0M190.0 78.0L213.9 77.1M213.9 77.1L235.7 76.2M235.7 76.2L255.7 75.5M-46.6 87.9L4.3 85.9M4.3 85.9L48.8 84.2M48.8 84.2L88.0 82.7M88.0 82.7L122.9 81.3M122.9 81.3L154.1 80.1M154.1 80.1L182.2 79.0M182.2 79.0L207.6 78.0M207.6 78.0L230.7 77.1M230.7 77.1L251.7 76.2M251.7 76.2L271.1 75.5M271.1 75.5L288.8 74.8M-20.2 87.9L28.9 85.9M28.9 85.9L71.8 84.2M71.8 84.2L109.7 82.7M109.7 82.7L143.4 81.3M143.4 81.3L173.5 80.1M173.5 80.1L200.6 79.0M200.6 79.0L225.1 78.0M225.1 78.0L247.4 77.1M247.4 77.1L267.8 76.2M267.8 76.2L286.4 75.5M286.4 75.5L303.6 74.8M-48.5 90.2L6.1 87.9M6.1 87.9L53.5 85.9M53.5 85.9L94.9 84.2M94.9 84.2L131.4 82.7M131.4 82.7L163.9 81.3M163.9 81.3L192.9 80.1M192.9 80.1L219.1 79.0M219.1 79.0L242.7 78.0M242.7 78.0L264.2 77.1M264.2 77.1L283.8 76.2M283.8 76.2L301.8 75.5M301.8 75.5L318.3 74.8M-20.1 90.2L32.5 87.9M32.5 87.9L78.1 85.9M78.1 85.9L118.0 84.2M118.0 84.2L153.1 82.7M153.1 82.7L184.4 81.3M184.4 81.3L212.4 80.1M212.4 80.1L237.5 79.0M237.5 79.0L260.3 78.0M260.3 78.0L281.0 77.1M281.0 77.1L299.8 76.2M299.8 76.2L317.1 75.5M317.1 75.5L333.1 74.8M8.3 90.2L58.9 87.9M58.9 87.9L102.7 85.9M102.7 85.9L141.0 84.2M141.0 84.2L174.8 82.7M174.8 82.7L204.9 81.3M204.9 81.3L231.8 80.1M231.8 80.1L256.0 79.0M256.0 79.0L277.8 78.0M277.8 78.0L297.7 77.1M297.7 77.1L315.9 76.2M315.9 76.2L332.5 75.5M332.5 75.5L347.8 74.8M36.7 90.2L85.2 87.9M85.2 87.9L127.3 85.9M127.3 85.9L164.1 84.2M164.1 84.2L196.5 82.7M196.5 82.7L225.4 81.3M225.4 81.3L251.2 80.1M251.2 80.1L274.4 79.0M274.4 79.0L295.4 78.0M295.4 78.0L314.5 77.1M314.5 77.1L331.9 76.2M331.9 76.2L347.9 75.5M347.9 75.5L362.6 74.8M65.1 90.2L111.6 87.9M111.6 87.9L151.9 85.9M151.9 85.9L187.2 84.2M187.2 84.2L218.2 82.7M218.2 82.7L245.9 81.3M245.9 81.3L270.6 80.1M270.6 80.1L292.8 79.0M292.8 79.0L313.0 78.0M313.0 78.0L331.2 77.1M331.2 77.1L347.9 76.2M347.9 76.2L363.2 75.5M363.2 75.5L377.3 74.8M93.5 90.2L138.0 87.9M138.0 87.9L176.5 85.9M176.5 85.9L210.2 84.2M210.2 84.2L240.0 82.7M240.0 82.7L266.4 81.3M266.4 81.3L290.0 80.1M290.0 80.1L311.3 79.0M311.3 79.0L330.5 78.0M330.5 78.0L348.0 77.1M348.0 77.1L364.0 76.2M364.0 76.2L378.6 75.5M378.6 75.5L392.1 74.8M121.9 90.2L164.3 87.9M164.3 87.9L201.1 85.9M201.1 85.9L233.3 84.2M233.3 84.2L261.7 82.7M261.7 82.7L286.9 81.3M286.9 81.3L309.4 80.1M309.4 80.1L329.7 79.0M329.7 79.0L348.1 78.0M348.1 78.0L364.8 77.1M364.8 77.1L380.0 76.2M380.0 76.2L394.0 75.5M394.0 75.5L406.8 74.8M150.3 90.2L190.7 87.9M190.7 87.9L225.7 85.9M225.7 85.9L256.3 84.2M256.3 84.2L283.4 82.7M283.4 82.7L307.4 81.3M307.4 81.3L328.8 80.1M328.8 80.1L348.2 79.0M348.2 79.0L365.6 78.0M365.6 78.0L381.5 77.1M381.5 77.1L396.0 76.2M396.0 76.2L409.3 75.5M409.3 75.5L421.6 74.8M421.6 74.8L432.8 74.2M217.1 87.9L250.3 85.9M250.3 85.9L279.4 84.2M279.4 84.2L305.1 82.7M305.1 82.7L327.9 81.3M327.9 81.3L348.3 80.1M348.3 80.1L366.6 79.0M366.6 79.0L383.2 78.0M383.2 78.0L398.3 77.1M398.3 77.1L412.1 76.2M412.1 76.2L424.7 75.5M424.7 75.5L436.3 74.8M436.3 74.8L447.0 74.2M243.4 87.9L274.9 85.9M274.9 85.9L302.5 84.2M302.5 84.2L326.8 82.7M326.8 82.7L348.4 81.3M348.4 81.3L367.7 80.1M367.7 80.1L385.0 79.0M385.0 79.0L400.8 78.0M400.8 78.0L415.1 77.1M415.1 77.1L428.1 76.2M428.1 76.2L440.1 75.5M440.1 75.5L451.1 74.8M451.1 74.8L461.2 74.2M269.8 87.9L299.5 85.9M299.5 85.9L325.5 84.2M325.5 84.2L348.5 82.7M348.5 82.7L368.9 81.3M368.9 81.3L387.1 80.1M387.1 80.1L403.5 79.0M403.5 79.0L418.3 78.0M418.3 78.0L431.8 77.1M431.8 77.1L444.1 76.2M444.1 76.2L455.4 75.5M455.4 75.5L465.8 74.8M465.8 74.8L475.4 74.2M296.2 87.9L324.1 85.9M324.1 85.9L348.6 84.2M348.6 84.2L370.2 82.7M370.2 82.7L389.4 81.3M389.4 81.3L406.5 80.1M406.5 80.1L421.9 79.0M421.9 79.0L435.9 78.0M435.9 78.0L448.6 77.1M448.6 77.1L460.2 76.2M460.2 76.2L470.8 75.5M470.8 75.5L480.6 74.8M480.6 74.8L489.6 74.2M322.5 87.9L348.7 85.9M348.7 85.9L371.7 84.2M371.7 84.2L391.9 82.7M391.9 82.7L409.8 81.3M409.8 81.3L425.9 80.1M425.9 80.1L440.4 79.0M440.4 79.0L453.5 78.0M453.5 78.0L465.3 77.1M465.3 77.1L476.2 76.2M476.2 76.2L486.1 75.5M486.1 75.5L495.3 74.8M495.3 74.8L503.7 74.2M348.9 87.9L373.4 85.9M373.4 85.9L394.7 84.2M394.7 84.2L413.6 82.7M413.6 82.7L430.3 81.3M430.3 81.3L445.3 80.1M445.3 80.1L458.8 79.0M458.8 79.0L471.0 78.0M471.0 78.0L482.1 77.1M482.1 77.1L492.2 76.2M492.2 76.2L501.5 75.5M501.5 75.5L510.0 74.8M510.0 74.8L517.9 74.2M375.3 87.9L398.0 85.9M398.0 85.9L417.8 84.2M417.8 84.2L435.3 82.7M435.3 82.7L450.8 81.3M450.8 81.3L464.7 80.1M464.7 80.1L477.3 79.0M477.3 79.0L488.6 78.0M488.6 78.0L498.9 77.1M498.9 77.1L508.3 76.2M508.3 76.2L516.9 75.5M516.9 75.5L524.8 74.8M524.8 74.8L532.1 74.2M401.7 87.9L422.6 85.9M422.6 85.9L440.9 84.2M440.9 84.2L457.0 82.7M457.0 82.7L471.3 81.3M471.3 81.3L484.2 80.1M484.2 80.1L495.7 79.0M495.7 79.0L506.1 78.0M506.1 78.0L515.6 77.1M515.6 77.1L524.3 76.2M524.3 76.2L532.2 75.5M532.2 75.5L539.5 74.8M539.5 74.8L546.3 74.2M447.2 85.9L463.9 84.2M463.9 84.2L478.7 82.7M478.7 82.7L491.8 81.3M491.8 81.3L503.6 80.1M503.6 80.1L514.1 79.0M514.1 79.0L523.7 78.0M523.7 78.0L532.4 77.1M532.4 77.1L540.3 76.2M540.3 76.2L547.6 75.5M547.6 75.5L554.3 74.8M554.3 74.8L560.5 74.2M471.8 85.9L487.0 84.2M487.0 84.2L500.4 82.7M500.4 82.7L512.3 81.3M512.3 81.3L523.0 80.1M523.0 80.1L532.6 79.0M532.6 79.0L541.3 78.0M541.3 78.0L549.2 77.1M549.2 77.1L556.4 76.2M556.4 76.2L563.0 75.5M563.0 75.5L569.0 74.8M569.0 74.8L574.6 74.2M496.4 85.9L510.0 84.2M510.0 84.2L522.1 82.7M522.1 82.7L532.8 81.3M532.8 81.3L542.4 80.1M542.4 80.1L551.0 79.0M551.0 79.0L558.8 78.0M558.8 78.0L565.9 77.1M565.9 77.1L572.4 76.2M572.4 76.2L578.3 75.5M578.3 75.5L583.8 74.8M583.8 74.8L588.8 74.2M521.0 85.9L533.1 84.2M533.1 84.2L543.8 82.7M543.8 82.7L553.3 81.3M553.3 81.3L561.8 80.1M561.8 80.1L569.5 79.0M569.5 79.0L576.4 78.0M576.4 78.0L582.7 77.1M582.7 77.1L588.4 76.2M588.4 76.2L593.7 75.5M593.7 75.5L598.5 74.8M598.5 74.8L603.0 74.2M545.6 85.9L556.2 84.2M556.2 84.2L565.5 82.7M565.5 82.7L573.8 81.3M573.8 81.3L581.2 80.1M581.2 80.1L587.9 79.0M587.9 79.0L594.0 78.0M594.0 78.0L599.5 77.1M599.5 77.1L604.5 76.2M604.5 76.2L609.1 75.5M609.1 75.5L613.3 74.8M613.3 74.8L617.2 74.2M570.2 85.9L579.2 84.2M579.2 84.2L587.2 82.7M587.2 82.7L594.3 81.3M594.3 81.3L600.7 80.1M600.7 80.1L606.4 79.0M606.4 79.0L611.5 78.0M611.5 78.0L616.2 77.1M616.2 77.1L620.5 76.2M620.5 76.2L624.4 75.5M624.4 75.5L628.0 74.8M628.0 74.8L631.4 74.2M594.8 85.9L602.3 84.2M602.3 84.2L608.9 82.7M608.9 82.7L614.8 81.3M614.8 81.3L620.1 80.1M620.1 80.1L624.8 79.0M624.8 79.0L629.1 78.0M629.1 78.0L633.0 77.1M633.0 77.1L636.5 76.2M636.5 76.2L639.8 75.5M639.8 75.5L642.8 74.8M642.8 74.8L645.6 74.2M619.4 85.9L625.4 84.2M625.4 84.2L630.6 82.7M630.6 82.7L635.3 81.3M635.3 81.3L639.5 80.1M639.5 80.1L643.2 79.0M643.2 79.0L646.6 78.0M646.6 78.0L649.7 77.1M649.7 77.1L652.6 76.2M652.6 76.2L655.2 75.5M655.2 75.5L657.5 74.8M657.5 74.8L659.7 74.2M644.0 85.9L648.4 84.2M648.4 84.2L652.3 82.7M652.3 82.7L655.8 81.3M655.8 81.3L658.9 80.1M658.9 80.1L661.7 79.0M661.7 79.0L664.2 78.0M664.2 78.0L666.5 77.1M666.5 77.1L668.6 76.2M668.6 76.2L670.5 75.5M670.5 75.5L672.3 74.8M672.3 74.8L673.9 74.2M668.6 85.9L671.5 84.2M671.5 84.2L674.0 82.7M674.0 82.7L676.3 81.3M676.3 81.3L678.3 80.1M678.3 80.1L680.1 79.0M680.1 79.0L681.8 78.0M681.8 78.0L683.3 77.1M683.3 77.1L684.6 76.2M684.6 76.2L685.9 75.5M685.9 75.5L687.0 74.8M687.0 74.8L688.1 74.2M693.2 85.9L694.6 84.2M694.6 84.2L695.7 82.7M695.7 82.7L696.8 81.3M696.8 81.3L697.7 80.1M697.7 80.1L698.6 79.0M698.6 79.0L699.3 78.0M699.3 78.0L700.0 77.1M700.0 77.1L700.7 76.2M700.7 76.2L701.2 75.5M701.2 75.5L701.8 74.8M701.8 74.8L702.3 74.2M742.4 85.9L740.7 84.2M740.7 84.2L739.1 82.7M739.1 82.7L737.8 81.3M737.8 81.3L736.6 80.1M736.6 80.1L735.5 79.0M735.5 79.0L734.5 78.0M734.5 78.0L733.6 77.1M733.6 77.1L732.7 76.2M732.7 76.2L732.0 75.5M732.0 75.5L731.3 74.8M731.3 74.8L730.6 74.2M767.0 85.9L763.8 84.2M763.8 84.2L760.9 82.7M760.9 82.7L758.3 81.3M758.3 81.3L756.0 80.1M756.0 80.1L753.9 79.0M753.9 79.0L752.0 78.0M752.0 78.0L750.3 77.1M750.3 77.1L748.8 76.2M748.8 76.2L747.3 75.5M747.3 75.5L746.0 74.8M746.0 74.8L744.8 74.2M791.6 85.9L786.8 84.2M786.8 84.2L782.6 82.7M782.6 82.7L778.8 81.3M778.8 81.3L775.4 80.1M775.4 80.1L772.3 79.0M772.3 79.0L769.6 78.0M769.6 78.0L767.1 77.1M767.1 77.1L764.8 76.2M764.8 76.2L762.7 75.5M762.7 75.5L760.8 74.8M760.8 74.8L759.0 74.2M816.2 85.9L809.9 84.2M809.9 84.2L804.3 82.7M804.3 82.7L799.3 81.3M799.3 81.3L794.8 80.1M794.8 80.1L790.8 79.0M790.8 79.0L787.2 78.0M787.2 78.0L783.8 77.1M783.8 77.1L780.8 76.2M780.8 76.2L778.1 75.5M778.1 75.5L775.5 74.8M775.5 74.8L773.2 74.2M840.9 85.9L832.9 84.2M832.9 84.2L826.0 82.7M826.0 82.7L819.8 81.3M819.8 81.3L814.2 80.1M814.2 80.1L809.2 79.0M809.2 79.0L804.7 78.0M804.7 78.0L800.6 77.1M800.6 77.1L796.9 76.2M796.9 76.2L793.4 75.5M793.4 75.5L790.3 74.8M790.3 74.8L787.4 74.2M865.5 85.9L856.0 84.2M856.0 84.2L847.7 82.7M847.7 82.7L840.3 81.3M840.3 81.3L833.6 80.1M833.6 80.1L827.7 79.0M827.7 79.0L822.3 78.0M822.3 78.0L817.4 77.1M817.4 77.1L812.9 76.2M812.9 76.2L808.8 75.5M808.8 75.5L805.0 74.8M805.0 74.8L801.5 74.2M890.1 85.9L879.1 84.2M879.1 84.2L869.4 82.7M869.4 82.7L860.8 81.3M860.8 81.3L853.0 80.1M853.0 80.1L846.1 79.0M846.1 79.0L839.8 78.0M839.8 78.0L834.1 77.1M834.1 77.1L828.9 76.2M828.9 76.2L824.2 75.5M824.2 75.5L819.8 74.8M819.8 74.8L815.7 74.2M914.7 85.9L902.1 84.2M902.1 84.2L891.1 82.7M891.1 82.7L881.3 81.3M881.3 81.3L872.5 80.1M872.5 80.1L864.6 79.0M864.6 79.0L857.4 78.0M857.4 78.0L850.9 77.1M850.9 77.1L845.0 76.2M845.0 76.2L839.5 75.5M839.5 75.5L834.5 74.8M834.5 74.8L829.9 74.2M939.3 85.9L925.2 84.2M925.2 84.2L912.8 82.7M912.8 82.7L901.7 81.3M901.7 81.3L891.9 80.1M891.9 80.1L883.0 79.0M883.0 79.0L875.0 78.0M875.0 78.0L867.7 77.1M867.7 77.1L861.0 76.2M861.0 76.2L854.9 75.5M854.9 75.5L849.3 74.8M849.3 74.8L844.1 74.2M963.9 85.9L948.3 84.2M948.3 84.2L934.5 82.7M934.5 82.7L922.2 81.3M922.2 81.3L911.3 80.1M911.3 80.1L901.4 79.0M901.4 79.0L892.5 78.0M892.5 78.0L884.4 77.1M884.4 77.1L877.0 76.2M877.0 76.2L870.3 75.5M870.3 75.5L864.0 74.8M864.0 74.8L858.3 74.2M988.5 85.9L971.3 84.2M971.3 84.2L956.2 82.7M956.2 82.7L942.7 81.3M942.7 81.3L930.7 80.1M930.7 80.1L919.9 79.0M919.9 79.0L910.1 78.0M910.1 78.0L901.2 77.1M901.2 77.1L893.1 76.2M893.1 76.2L885.6 75.5M885.6 75.5L878.8 74.8M878.8 74.8L872.4 74.2M994.4 84.2L977.9 82.7M977.9 82.7L963.2 81.3M963.2 81.3L950.1 80.1M950.1 80.1L938.3 79.0M938.3 79.0L927.7 78.0M927.7 78.0L918.0 77.1M918.0 77.1L909.1 76.2M909.1 76.2L901.0 75.5M901.0 75.5L893.5 74.8M893.5 74.8L886.6 74.2M983.7 81.3L969.5 80.1M969.5 80.1L956.8 79.0M956.8 79.0L945.2 78.0M945.2 78.0L934.7 77.1M934.7 77.1L925.1 76.2M925.1 76.2L916.3 75.5M916.3 75.5L908.3 74.8M908.3 74.8L900.8 74.2M989.0 80.1L975.2 79.0M975.2 79.0L962.8 78.0M962.8 78.0L951.5 77.1M951.5 77.1L941.2 76.2M941.2 76.2L931.7 75.5M931.7 75.5L923.0 74.8M923.0 74.8L915.0 74.2M980.3 78.0L968.2 77.1M968.2 77.1L957.2 76.2M957.2 76.2L947.1 75.5M947.1 75.5L937.8 74.8M937.8 74.8L929.2 74.2M985.0 77.1L973.2 76.2M973.2 76.2L962.4 75.5M962.4 75.5L952.5 74.8M952.5 74.8L943.3 74.2M989.3 76.2L977.8 75.5M977.8 75.5L967.3 74.8M967.3 74.8L957.5 74.2M982.0 74.8L971.7 74.2"/><path stroke-opacity="0.10" d="M615.2 83.8L649.3 83.8M649.3 83.8L683.4 83.8M683.4 83.8L717.6 83.8M717.6 83.8L751.7 83.8M751.7 83.8L785.9 83.8M785.9 83.8L820.0 83.8M473.7 84.4L508.5 84.4M508.5 84.4L543.4 84.4M543.4 84.4L578.2 84.4M578.2 84.4L613.1 84.4M613.1 84.4L647.9 84.4M647.9 84.4L682.8 84.4M682.8 84.4L717.6 84.4M717.6 84.4L752.5 84.4M752.5 84.4L787.3 84.4M787.3 84.4L822.2 84.4M822.2 84.4L857.0 84.4M857.0 84.4L891.9 84.4M891.9 84.4L926.7 84.4M926.7 84.4L961.6 84.4M361.8 84.9L397.4 84.9M397.4 84.9L433.0 84.9M433.0 84.9L468.6 84.9M468.6 84.9L504.2 84.9M504.2 84.9L539.8 84.9M539.8 84.9L575.4 84.9M575.4 84.9L611.0 84.9M611.0 84.9L646.5 84.9M646.5 84.9L682.1 84.9M682.1 84.9L717.7 84.9M717.7 84.9L753.3 84.9M753.3 84.9L788.9 84.9M788.9 84.9L824.5 84.9M824.5 84.9L860.1 84.9M860.1 84.9L895.6 84.9M895.6 84.9L931.2 84.9M931.2 84.9L966.8 84.9M966.8 84.9L1002.4 84.9M281.5 85.5L317.9 85.5M317.9 85.5L354.2 85.5M354.2 85.5L390.6 85.5M390.6 85.5L426.9 85.5M426.9 85.5L463.3 85.5M463.3 85.5L499.7 85.5M499.7 85.5L536.0 85.5M536.0 85.5L572.4 85.5M572.4 85.5L608.7 85.5M608.7 85.5L645.1 85.5M645.1 85.5L681.4 85.5M681.4 85.5L717.8 85.5M717.8 85.5L754.1 85.5M754.1 85.5L790.5 85.5M790.5 85.5L826.8 85.5M826.8 85.5L863.2 85.5M863.2 85.5L899.6 85.5M899.6 85.5L935.9 85.5M935.9 85.5L972.3 85.5M972.3 85.5L1008.6 85.5M234.8 86.1L272.0 86.1M272.0 86.1L309.1 86.1M309.1 86.1L346.3 86.1M346.3 86.1L383.4 86.1M383.4 86.1L420.6 86.1M420.6 86.1L457.8 86.1M457.8 86.1L494.9 86.1M494.9 86.1L532.1 86.1M532.1 86.1L569.2 86.1M569.2 86.1L606.4 86.1M606.4 86.1L643.5 86.1M643.5 86.1L680.7 86.1M680.7 86.1L717.8 86.1M717.8 86.1L755.0 86.1M755.0 86.1L792.2 86.1M792.2 86.1L829.3 86.1M829.3 86.1L866.5 86.1M866.5 86.1L903.6 86.1M903.6 86.1L940.8 86.1M940.8 86.1L977.9 86.1M977.9 86.1L1015.1 86.1M148.0 86.7L186.0 86.7M186.0 86.7L224.0 86.7M224.0 86.7L262.0 86.7M262.0 86.7L300.0 86.7M300.0 86.7L338.0 86.7M338.0 86.7L376.0 86.7M376.0 86.7L414.0 86.7M414.0 86.7L452.0 86.7M452.0 86.7L490.0 86.7M490.0 86.7L528.0 86.7M528.0 86.7L565.9 86.7M565.9 86.7L603.9 86.7M603.9 86.7L641.9 86.7M641.9 86.7L679.9 86.7M679.9 86.7L717.9 86.7M717.9 86.7L755.9 86.7M755.9 86.7L793.9 86.7M793.9 86.7L831.9 86.7M831.9 86.7L869.9 86.7M869.9 86.7L907.9 86.7M907.9 86.7L945.9 86.7M945.9 86.7L983.9 86.7M96.1 87.4L134.9 87.4M134.9 87.4L173.8 87.4M173.8 87.4L212.7 87.4M212.7 87.4L251.6 87.4M251.6 87.4L290.4 87.4M290.4 87.4L329.3 87.4M329.3 87.4L368.2 87.4M368.2 87.4L407.0 87.4M407.0 87.4L445.9 87.4M445.9 87.4L484.8 87.4M484.8 87.4L523.6 87.4M523.6 87.4L562.5 87.4M562.5 87.4L601.4 87.4M601.4 87.4L640.3 87.4M640.3 87.4L679.1 87.4M679.1 87.4L718.0 87.4M718.0 87.4L756.9 87.4M756.9 87.4L795.7 87.4M795.7 87.4L834.6 87.4M834.6 87.4L873.5 87.4M873.5 87.4L912.4 87.4M912.4 87.4L951.2 87.4M951.2 87.4L990.1 87.4M41.7 88.1L81.5 88.1M81.5 88.1L121.3 88.1M121.3 88.1L161.0 88.1M161.0 88.1L200.8 88.1M200.8 88.1L240.6 88.1M240.6 88.1L280.4 88.1M280.4 88.1L320.2 88.1M320.2 88.1L360.0 88.1M360.0 88.1L399.8 88.1M399.8 88.1L439.6 88.1M439.6 88.1L479.3 88.1M479.3 88.1L519.1 88.1M519.1 88.1L558.9 88.1M558.9 88.1L598.7 88.1M598.7 88.1L638.5 88.1M638.5 88.1L678.3 88.1M678.3 88.1L718.1 88.1M718.1 88.1L757.9 88.1M757.9 88.1L797.7 88.1M797.7 88.1L837.4 88.1M837.4 88.1L877.2 88.1M877.2 88.1L917.0 88.1M917.0 88.1L956.8 88.1M956.8 88.1L996.6 88.1M-15.4 88.8L25.4 88.8M25.4 88.8L66.1 88.8M66.1 88.8L106.9 88.8M106.9 88.8L147.7 88.8M147.7 88.8L188.4 88.8M188.4 88.8L229.2 88.8M229.2 88.8L269.9 88.8M269.9 88.8L310.7 88.8M310.7 88.8L351.4 88.8M351.4 88.8L392.2 88.8M392.2 88.8L432.9 88.8M432.9 88.8L473.7 88.8M473.7 88.8L514.4 88.8M514.4 88.8L555.2 88.8M555.2 88.8L595.9 88.8M595.9 88.8L636.7 88.8M636.7 88.8L677.4 88.8M677.4 88.8L718.2 88.8M718.2 88.8L758.9 88.8M758.9 88.8L799.7 88.8M799.7 88.8L840.4 88.8M840.4 88.8L881.2 88.8M881.2 88.8L921.9 88.8M921.9 88.8L962.7 88.8M962.7 88.8L1003.4 88.8M-33.4 89.6L8.3 89.6M8.3 89.6L50.1 89.6M50.1 89.6L91.8 89.6M91.8 89.6L133.6 89.6M133.6 89.6L175.4 89.6M175.4 89.6L217.1 89.6M217.1 89.6L258.9 89.6M258.9 89.6L300.6 89.6M300.6 89.6L342.4 89.6M342.4 89.6L384.2 89.6M384.2 89.6L425.9 89.6M425.9 89.6L467.7 89.6M467.7 89.6L509.4 89.6M509.4 89.6L551.2 89.6M551.2 89.6L593.0 89.6M593.0 89.6L634.7 89.6M634.7 89.6L676.5 89.6M676.5 89.6L718.3 89.6M718.3 89.6L760.0 89.6M760.0 89.6L801.8 89.6M801.8 89.6L843.5 89.6M843.5 89.6L885.3 89.6M885.3 89.6L927.1 89.6M927.1 89.6L968.8 89.6M968.8 89.6L1010.6 89.6M-9.6 90.4L33.2 90.4M33.2 90.4L76.0 90.4M76.0 90.4L118.8 90.4M118.8 90.4L161.7 90.4M161.7 90.4L204.5 90.4M204.5 90.4L247.3 90.4M247.3 90.4L290.1 90.4M290.1 90.4L332.9 90.4M332.9 90.4L375.8 90.4M375.8 90.4L418.6 90.4M418.6 90.4L461.4 90.4M461.4 90.4L504.2 90.4M504.2 90.4L547.1 90.4M547.1 90.4L589.9 90.4M589.9 90.4L632.7 90.4M632.7 90.4L675.5 90.4M675.5 90.4L718.3 90.4M718.3 90.4L761.2 90.4M761.2 90.4L804.0 90.4M804.0 90.4L846.8 90.4M846.8 90.4L889.6 90.4M889.6 90.4L932.5 90.4M932.5 90.4L975.3 90.4M975.3 90.4L1018.1 90.4M-28.5 91.2L15.4 91.2M15.4 91.2L59.4 91.2M59.4 91.2L103.3 91.2M103.3 91.2L147.2 91.2M147.2 91.2L191.2 91.2M191.2 91.2L235.1 91.2M235.1 91.2L279.1 91.2M279.1 91.2L323.0 91.2M323.0 91.2L366.9 91.2M366.9 91.2L410.9 91.2M410.9 91.2L454.8 91.2M454.8 91.2L498.7 91.2M498.7 91.2L542.7 91.2M542.7 91.2L586.6 91.2M586.6 91.2L630.6 91.2M630.6 91.2L674.5 91.2M674.5 91.2L718.4 91.2M718.4 91.2L762.4 91.2M762.4 91.2L806.3 91.2M806.3 91.2L850.3 91.2M850.3 91.2L894.2 91.2M894.2 91.2L938.1 91.2M938.1 91.2L982.1 91.2M-48.4 92.1L-3.3 92.1M-3.3 92.1L41.8 92.1M41.8 92.1L86.9 92.1M86.9 92.1L132.0 92.1M132.0 92.1L177.2 92.1M177.2 92.1L222.3 92.1M222.3 92.1L267.4 92.1M267.4 92.1L312.5 92.1M312.5 92.1L357.6 92.1M357.6 92.1L402.7 92.1M402.7 92.1L447.9 92.1M447.9 92.1L493.0 92.1M493.0 92.1L538.1 92.1M538.1 92.1L583.2 92.1M853.9 92.1L899.0 92.1M899.0 92.1L944.1 92.1M944.1 92.1L989.2 92.1M-23.1 93.0L23.3 93.0M23.3 93.0L69.7 93.0M69.7 93.0L116.0 93.0M116.0 93.0L162.4 93.0M162.4 93.0L208.7 93.0M208.7 93.0L255.1 93.0M255.1 93.0L301.4 93.0M301.4 93.0L347.8 93.0M347.8 93.0L394.2 93.0M-43.9 94.0L3.7 94.0M3.7 94.0L51.4 94.0M51.4 94.0L99.1 94.0M99.1 94.0L146.7 94.0M146.7 94.0L194.4 94.0M194.4 94.0L242.1 94.0M242.1 94.0L289.8 94.0M-17.0 95.1L32.1 95.1M32.1 95.1L81.2 95.1M81.2 95.1L130.2 95.1M130.2 95.1L179.3 95.1M179.3 95.1L228.3 95.1M-38.9 96.2L11.6 96.2M11.6 96.2L62.2 96.2M62.2 96.2L112.7 96.2M-10.1 97.3L42.0 97.3M-50.8 92.9L8.3 90.2M-20.0 92.9L36.7 90.2M-53.4 96.1L10.8 92.9M10.8 92.9L65.1 90.2M-19.8 96.1L41.6 92.9M41.6 92.9L93.5 90.2M-56.6 99.9L13.8 96.1M13.8 96.1L72.4 92.9M72.4 92.9L121.9 90.2M-19.6 99.9L47.4 96.1M47.4 96.1L103.1 92.9M103.1 92.9L150.3 90.2M17.3 99.9L80.9 96.1M80.9 96.1L133.9 92.9M133.9 92.9L178.7 90.2M178.7 90.2L217.1 87.9M54.3 99.9L114.5 96.1M114.5 96.1L164.7 92.9M164.7 92.9L207.1 90.2M207.1 90.2L243.4 87.9M91.2 99.9L148.1 96.1M148.1 96.1L195.5 92.9M195.5 92.9L235.5 90.2M235.5 90.2L269.8 87.9M128.2 99.9L181.7 96.1M181.7 96.1L226.2 92.9M226.2 92.9L263.9 90.2M263.9 90.2L296.2 87.9M165.1 99.9L215.3 96.1M215.3 96.1L257.0 92.9M257.0 92.9L292.3 90.2M292.3 90.2L322.5 87.9M202.1 99.9L248.9 96.1M248.9 96.1L287.8 92.9M287.8 92.9L320.7 90.2M320.7 90.2L348.9 87.9M282.4 96.1L318.6 92.9M318.6 92.9L349.1 90.2M349.1 90.2L375.3 87.9M316.0 96.1L349.3 92.9M349.3 92.9L377.5 90.2M377.5 90.2L401.7 87.9M349.6 96.1L380.1 92.9M380.1 92.9L405.9 90.2M405.9 90.2L428.0 87.9M428.0 87.9L447.2 85.9M383.2 96.1L410.9 92.9M410.9 92.9L434.3 90.2M434.3 90.2L454.4 87.9M454.4 87.9L471.8 85.9M416.8 96.1L441.7 92.9M441.7 92.9L462.7 90.2M462.7 90.2L480.8 87.9M480.8 87.9L496.4 85.9M450.3 96.1L472.4 92.9M472.4 92.9L491.1 90.2M491.1 90.2L507.1 87.9M507.1 87.9L521.0 85.9M483.9 96.1L503.2 92.9M503.2 92.9L519.5 90.2M519.5 90.2L533.5 87.9M533.5 87.9L545.6 85.9M517.5 96.1L534.0 92.9M534.0 92.9L547.9 90.2M547.9 90.2L559.9 87.9M559.9 87.9L570.2 85.9M551.1 96.1L564.8 92.9M564.8 92.9L576.3 90.2M576.3 90.2L586.2 87.9M586.2 87.9L594.8 85.9M584.7 96.1L595.5 92.9M595.5 92.9L604.7 90.2M604.7 90.2L612.6 87.9M612.6 87.9L619.4 85.9M618.3 96.1L626.3 92.9M626.3 92.9L633.1 90.2M633.1 90.2L639.0 87.9M639.0 87.9L644.0 85.9M651.8 96.1L657.1 92.9M657.1 92.9L661.5 90.2M661.5 90.2L665.3 87.9M665.3 87.9L668.6 85.9M685.4 96.1L687.9 92.9M687.9 92.9L689.9 90.2M689.9 90.2L691.7 87.9M691.7 87.9L693.2 85.9M752.6 96.1L749.4 92.9M749.4 92.9L746.7 90.2M746.7 90.2L744.4 87.9M744.4 87.9L742.4 85.9M786.2 96.1L780.2 92.9M780.2 92.9L775.1 90.2M775.1 90.2L770.8 87.9M770.8 87.9L767.0 85.9M819.8 96.1L811.0 92.9M811.0 92.9L803.5 90.2M803.5 90.2L797.2 87.9M797.2 87.9L791.6 85.9M853.3 96.1L841.7 92.9M841.7 92.9L831.9 90.2M831.9 90.2L823.5 87.9M823.5 87.9L816.2 85.9M886.9 96.1L872.5 92.9M872.5 92.9L860.3 90.2M860.3 90.2L849.9 87.9M849.9 87.9L840.9 85.9M920.5 96.1L903.3 92.9M903.3 92.9L888.7 90.2M888.7 90.2L876.3 87.9M876.3 87.9L865.5 85.9M954.1 96.1L934.1 92.9M934.1 92.9L917.1 90.2M917.1 90.2L902.6 87.9M902.6 87.9L890.1 85.9M987.7 96.1L964.8 92.9M964.8 92.9L945.5 90.2M945.5 90.2L929.0 87.9M929.0 87.9L914.7 85.9M995.6 92.9L973.9 90.2M973.9 90.2L955.4 87.9M955.4 87.9L939.3 85.9M981.7 87.9L963.9 85.9"/><path stroke-opacity="0.15" d="M583.2 92.1L628.3 92.1M628.3 92.1L673.4 92.1M673.4 92.1L718.5 92.1M718.5 92.1L763.7 92.1M763.7 92.1L808.8 92.1M808.8 92.1L853.9 92.1M394.2 93.0L440.5 93.0M440.5 93.0L486.9 93.0M486.9 93.0L533.2 93.0M533.2 93.0L579.6 93.0M579.6 93.0L625.9 93.0M625.9 93.0L672.3 93.0M672.3 93.0L718.7 93.0M718.7 93.0L765.0 93.0M765.0 93.0L811.4 93.0M811.4 93.0L857.7 93.0M857.7 93.0L904.1 93.0M904.1 93.0L950.4 93.0M950.4 93.0L996.8 93.0M289.8 94.0L337.4 94.0M337.4 94.0L385.1 94.0M385.1 94.0L432.8 94.0M432.8 94.0L480.4 94.0M480.4 94.0L528.1 94.0M528.1 94.0L575.8 94.0M575.8 94.0L623.4 94.0M623.4 94.0L671.1 94.0M671.1 94.0L718.8 94.0M718.8 94.0L766.4 94.0M766.4 94.0L814.1 94.0M814.1 94.0L861.8 94.0M861.8 94.0L909.4 94.0M909.4 94.0L957.1 94.0M957.1 94.0L1004.8 94.0M228.3 95.1L277.4 95.1M277.4 95.1L326.4 95.1M326.4 95.1L375.5 95.1M375.5 95.1L424.6 95.1M424.6 95.1L473.6 95.1M473.6 95.1L522.7 95.1M522.7 95.1L571.7 95.1M571.7 95.1L620.8 95.1M620.8 95.1L669.8 95.1M669.8 95.1L718.9 95.1M718.9 95.1L768.0 95.1M768.0 95.1L817.0 95.1M817.0 95.1L866.1 95.1M866.1 95.1L915.1 95.1M915.1 95.1L964.2 95.1M964.2 95.1L1013.2 95.1M112.7 96.2L163.2 96.2M163.2 96.2L213.7 96.2M213.7 96.2L264.3 96.2M264.3 96.2L314.8 96.2M314.8 96.2L365.3 96.2M365.3 96.2L415.9 96.2M415.9 96.2L466.4 96.2M466.4 96.2L516.9 96.2M516.9 96.2L567.4 96.2M567.4 96.2L618.0 96.2M618.0 96.2L668.5 96.2M668.5 96.2L719.0 96.2M719.0 96.2L769.6 96.2M769.6 96.2L820.1 96.2M820.1 96.2L870.6 96.2M870.6 96.2L921.1 96.2M921.1 96.2L971.7 96.2M971.7 96.2L1022.2 96.2M42.0 97.3L94.1 97.3M94.1 97.3L146.2 97.3M146.2 97.3L198.3 97.3M198.3 97.3L250.3 97.3M250.3 97.3L302.4 97.3M302.4 97.3L354.5 97.3M354.5 97.3L406.6 97.3M406.6 97.3L458.7 97.3M458.7 97.3L510.8 97.3M510.8 97.3L562.9 97.3M562.9 97.3L615.0 97.3M615.0 97.3L667.1 97.3M667.1 97.3L719.2 97.3M719.2 97.3L771.3 97.3M771.3 97.3L823.3 97.3M823.3 97.3L875.4 97.3M875.4 97.3L927.5 97.3M927.5 97.3L979.6 97.3M-33.2 98.6L20.5 98.6M20.5 98.6L74.3 98.6M74.3 98.6L128.0 98.6M128.0 98.6L181.8 98.6M181.8 98.6L235.5 98.6M235.5 98.6L289.3 98.6M289.3 98.6L343.0 98.6M343.0 98.6L396.8 98.6M396.8 98.6L450.5 98.6M450.5 98.6L504.3 98.6M504.3 98.6L558.1 98.6M558.1 98.6L611.8 98.6M611.8 98.6L665.6 98.6M665.6 98.6L719.3 98.6M719.3 98.6L773.1 98.6M773.1 98.6L826.8 98.6M826.8 98.6L880.6 98.6M880.6 98.6L934.3 98.6M934.3 98.6L988.1 98.6M-57.9 99.9L-2.3 99.9M-2.3 99.9L53.2 99.9M53.2 99.9L108.7 99.9M108.7 99.9L164.2 99.9M164.2 99.9L219.8 99.9M219.8 99.9L275.3 99.9M275.3 99.9L330.8 99.9M330.8 99.9L386.3 99.9M386.3 99.9L441.8 99.9M-26.8 101.4L30.6 101.4M30.6 101.4L88.1 101.4M88.1 101.4L145.5 101.4M145.5 101.4L202.9 101.4M202.9 101.4L260.3 101.4M260.3 101.4L317.7 101.4M-52.9 102.9L6.5 102.9M6.5 102.9L66.0 102.9M66.0 102.9L125.4 102.9M125.4 102.9L184.8 102.9M-19.4 104.5L42.2 104.5M42.2 104.5L103.8 104.5M-47.2 106.3L16.7 106.3M-60.5 104.5L17.3 99.9M-19.4 104.5L54.3 99.9M-11.2 106.7L-4.4 106.3M-4.4 106.3L2.3 105.8M2.3 105.8L8.9 105.4M8.9 105.4L15.4 104.9M15.4 104.9L21.7 104.5M21.7 104.5L91.2 99.9M-9.4 109.7L-2.2 109.1M-2.2 109.1L4.9 108.6M4.9 108.6L11.8 108.1M11.8 108.1L18.6 107.7M18.6 107.7L25.3 107.2M25.3 107.2L31.8 106.7M31.8 106.7L38.3 106.3M38.3 106.3L44.6 105.8M44.6 105.8L50.7 105.4M50.7 105.4L56.8 104.9M56.8 104.9L62.8 104.5M62.8 104.5L128.2 99.9M29.3 110.2L36.2 109.7M36.2 109.7L43.0 109.1M43.0 109.1L49.6 108.6M49.6 108.6L56.1 108.1M56.1 108.1L62.5 107.7M62.5 107.7L68.7 107.2M68.7 107.2L74.9 106.7M74.9 106.7L80.9 106.3M80.9 106.3L86.8 105.8M86.8 105.8L92.6 105.4M92.6 105.4L98.3 104.9M98.3 104.9L103.8 104.5M103.8 104.5L165.1 99.9M94.3 108.6L100.4 108.1M100.4 108.1L106.3 107.7M106.3 107.7L112.2 107.2M112.2 107.2L117.9 106.7M117.9 106.7L123.5 106.3M123.5 106.3L129.0 105.8M129.0 105.8L134.4 105.4M134.4 105.4L139.7 104.9M139.7 104.9L144.9 104.5M144.9 104.5L202.1 99.9M150.2 107.7L155.6 107.2M155.6 107.2L160.9 106.7M160.9 106.7L166.1 106.3M166.1 106.3L171.2 105.8M171.2 105.8L176.2 105.4M176.2 105.4L181.2 104.9M181.2 104.9L186.0 104.5M186.0 104.5L239.1 99.9M239.1 99.9L282.4 96.1M203.9 106.7L208.7 106.3M208.7 106.3L213.5 105.8M213.5 105.8L218.1 105.4M218.1 105.4L222.6 104.9M222.6 104.9L227.1 104.5M227.1 104.5L276.0 99.9M276.0 99.9L316.0 96.1M251.4 106.3L255.7 105.8M255.7 105.8L259.9 105.4M259.9 105.4L264.1 104.9M264.1 104.9L268.2 104.5M268.2 104.5L313.0 99.9M313.0 99.9L349.6 96.1M301.7 105.4L305.5 104.9M305.5 104.9L309.2 104.5M309.2 104.5L349.9 99.9M349.9 99.9L383.2 96.1M347.0 104.9L350.3 104.5M350.3 104.5L386.9 99.9M386.9 99.9L416.8 96.1M391.4 104.5L423.8 99.9M423.8 99.9L450.3 96.1M432.5 104.5L460.8 99.9M460.8 99.9L483.9 96.1M473.5 104.5L497.7 99.9M497.7 99.9L517.5 96.1M514.6 104.5L534.7 99.9M534.7 99.9L551.1 96.1M555.7 104.5L571.6 99.9M571.6 99.9L584.7 96.1M596.8 104.5L608.6 99.9M608.6 99.9L618.3 96.1M637.8 104.5L645.5 99.9M645.5 99.9L651.8 96.1M678.9 104.5L682.5 99.9M682.5 99.9L685.4 96.1M761.1 104.5L756.4 99.9M756.4 99.9L752.6 96.1M802.1 104.5L793.4 99.9M793.4 99.9L786.2 96.1M843.2 104.5L830.3 99.9M830.3 99.9L819.8 96.1M884.3 104.5L867.3 99.9M867.3 99.9L853.3 96.1M925.4 104.5L904.2 99.9M904.2 99.9L886.9 96.1M966.5 104.5L941.2 99.9M941.2 99.9L920.5 96.1M978.1 99.9L954.1 96.1"/><path stroke-opacity="0.20" d="M441.8 99.9L497.4 99.9M497.4 99.9L552.9 99.9M552.9 99.9L608.4 99.9M608.4 99.9L663.9 99.9M663.9 99.9L719.5 99.9M719.5 99.9L775.0 99.9M775.0 99.9L830.5 99.9M830.5 99.9L886.0 99.9M886.0 99.9L941.6 99.9M941.6 99.9L997.1 99.9M317.7 101.4L375.1 101.4M375.1 101.4L432.6 101.4M432.6 101.4L490.0 101.4M490.0 101.4L547.4 101.4M547.4 101.4L604.8 101.4M604.8 101.4L662.2 101.4M662.2 101.4L719.6 101.4M719.6 101.4L777.0 101.4M777.0 101.4L834.5 101.4M834.5 101.4L891.9 101.4M891.9 101.4L949.3 101.4M949.3 101.4L1006.7 101.4M184.8 102.9L244.3 102.9M244.3 102.9L303.7 102.9M303.7 102.9L363.2 102.9M363.2 102.9L422.6 102.9M422.6 102.9L482.0 102.9M482.0 102.9L541.5 102.9M541.5 102.9L600.9 102.9M600.9 102.9L660.4 102.9M660.4 102.9L719.8 102.9M719.8 102.9L779.2 102.9M779.2 102.9L838.7 102.9M838.7 102.9L898.1 102.9M898.1 102.9L957.6 102.9M957.6 102.9L1017.0 102.9M103.8 104.5L165.5 104.5M165.5 104.5L227.1 104.5M227.1 104.5L288.7 104.5M288.7 104.5L350.3 104.5M350.3 104.5L411.9 104.5M411.9 104.5L473.5 104.5M473.5 104.5L535.2 104.5M535.2 104.5L596.8 104.5M596.8 104.5L658.4 104.5M658.4 104.5L720.0 104.5M720.0 104.5L781.6 104.5M781.6 104.5L843.2 104.5M843.2 104.5L904.8 104.5M904.8 104.5L966.5 104.5M966.5 104.5L1028.1 104.5M16.7 106.3L80.7 106.3M80.7 106.3L144.6 106.3M144.6 106.3L208.6 106.3M208.6 106.3L272.5 106.3M272.5 106.3L336.5 106.3M336.5 106.3L400.4 106.3M400.4 106.3L464.4 106.3M976.0 106.3L1040.0 106.3M-10.8 108.2L55.7 108.2M55.7 108.2L122.1 108.2M122.1 108.2L188.6 108.2M188.6 108.2L255.1 108.2M255.1 108.2L321.6 108.2M-40.6 110.2L28.6 110.2M28.6 110.2L97.8 110.2M97.8 110.2L167.0 110.2M-73.0 112.5L-0.8 112.5M-0.8 112.5L71.4 112.5M-7.4 113.0L0.3 112.4M0.3 112.4L7.8 111.8M7.8 111.8L15.1 111.3M15.1 111.3L22.3 110.7M22.3 110.7L29.3 110.2M-5.1 116.7L3.1 116.1M3.1 116.1L11.0 115.4M11.0 115.4L18.8 114.8M18.8 114.8L26.4 114.2M26.4 114.2L33.9 113.6M33.9 113.6L41.2 113.0M41.2 113.0L48.3 112.4M48.3 112.4L55.3 111.8M55.3 111.8L62.1 111.3M62.1 111.3L68.8 110.7M68.8 110.7L75.4 110.2M75.4 110.2L81.8 109.7M81.8 109.7L88.2 109.1M88.2 109.1L94.3 108.6M31.2 118.1L39.1 117.4M39.1 117.4L46.8 116.7M46.8 116.7L54.4 116.1M54.4 116.1L61.8 115.4M61.8 115.4L69.0 114.8M69.0 114.8L76.1 114.2M76.1 114.2L83.0 113.6M83.0 113.6L89.7 113.0M89.7 113.0L96.4 112.4M96.4 112.4L102.8 111.8M102.8 111.8L109.2 111.3M109.2 111.3L115.4 110.7M115.4 110.7L121.5 110.2M121.5 110.2L127.5 109.7M127.5 109.7L133.3 109.1M133.3 109.1L139.1 108.6M139.1 108.6L144.7 108.1M144.7 108.1L150.2 107.7M98.7 116.7L105.7 116.1M105.7 116.1L112.5 115.4M112.5 115.4L119.2 114.8M119.2 114.8L125.7 114.2M125.7 114.2L132.1 113.6M132.1 113.6L138.3 113.0M138.3 113.0L144.4 112.4M144.4 112.4L150.4 111.8M150.4 111.8L156.2 111.3M156.2 111.3L162.0 110.7M162.0 110.7L167.6 110.2M167.6 110.2L173.1 109.7M173.1 109.7L178.5 109.1M178.5 109.1L183.8 108.6M183.8 108.6L189.0 108.1M189.0 108.1L194.1 107.7M194.1 107.7L199.0 107.2M199.0 107.2L203.9 106.7M163.2 115.4L169.3 114.8M169.3 114.8L175.3 114.2M175.3 114.2L181.1 113.6M181.1 113.6L186.9 113.0M186.9 113.0L192.4 112.4M192.4 112.4L197.9 111.8M197.9 111.8L203.3 111.3M203.3 111.3L208.5 110.7M208.5 110.7L213.7 110.2M213.7 110.2L218.7 109.7M218.7 109.7L223.7 109.1M223.7 109.1L228.5 108.6M228.5 108.6L233.3 108.1M233.3 108.1L237.9 107.7M237.9 107.7L242.5 107.2M242.5 107.2L247.0 106.7M247.0 106.7L251.4 106.3M224.9 114.2L230.2 113.6M230.2 113.6L235.4 113.0M235.4 113.0L240.5 112.4M240.5 112.4L245.5 111.8M245.5 111.8L250.3 111.3M250.3 111.3L255.1 110.7M255.1 110.7L259.8 110.2M259.8 110.2L264.3 109.7M264.3 109.7L268.8 109.1M268.8 109.1L273.2 108.6M273.2 108.6L277.5 108.1M277.5 108.1L281.8 107.7M281.8 107.7L285.9 107.2M285.9 107.2L290.0 106.7M290.0 106.7L294.0 106.3M294.0 106.3L297.9 105.8M297.9 105.8L301.7 105.4M284.0 113.0L288.5 112.4M288.5 112.4L293.0 111.8M293.0 111.8L297.4 111.3M297.4 111.3L301.7 110.7M301.7 110.7L305.9 110.2M305.9 110.2L310.0 109.7M310.0 109.7L314.0 109.1M314.0 109.1L318.0 108.6M318.0 108.6L321.8 108.1M321.8 108.1L325.6 107.7M325.6 107.7L329.4 107.2M329.4 107.2L333.0 106.7M333.0 106.7L336.6 106.3M336.6 106.3L340.1 105.8M340.1 105.8L343.6 105.4M343.6 105.4L347.0 104.9M336.6 112.4L340.5 111.8M340.5 111.8L344.4 111.3M344.4 111.3L348.2 110.7M348.2 110.7L351.9 110.2M351.9 110.2L355.6 109.7M355.6 109.7L359.2 109.1M359.2 109.1L362.7 108.6M362.7 108.6L366.1 108.1M366.1 108.1L369.5 107.7M369.5 107.7L372.8 107.2M372.8 107.2L376.0 106.7M376.0 106.7L379.2 106.3M379.2 106.3L382.4 105.8M382.4 105.8L385.4 105.4M385.4 105.4L388.4 104.9M388.4 104.9L391.4 104.5M388.1 111.8L391.5 111.3M391.5 111.3L394.8 110.7M394.8 110.7L398.0 110.2M398.0 110.2L401.2 109.7M401.2 109.7L404.3 109.1M404.3 109.1L407.4 108.6M407.4 108.6L410.4 108.1M410.4 108.1L413.4 107.7M413.4 107.7L416.2 107.2M416.2 107.2L419.1 106.7M419.1 106.7L421.8 106.3M421.8 106.3L424.6 105.8M424.6 105.8L427.3 105.4M427.3 105.4L429.9 104.9M429.9 104.9L432.5 104.5M438.5 111.3L441.3 110.7M441.3 110.7L444.1 110.2M444.1 110.2L446.8 109.7M446.8 109.7L449.5 109.1M449.5 109.1L452.1 108.6M452.1 108.6L454.7 108.1M454.7 108.1L457.2 107.7M457.2 107.7L459.7 107.2M459.7 107.2L462.1 106.7M462.1 106.7L464.5 106.3M464.5 106.3L466.8 105.8M466.8 105.8L469.1 105.4M469.1 105.4L471.3 104.9M471.3 104.9L473.5 104.5M487.9 110.7L490.2 110.2M490.2 110.2L492.5 109.7M492.5 109.7L494.7 109.1M494.7 109.1L496.9 108.6M496.9 108.6L499.0 108.1M499.0 108.1L501.1 107.7M501.1 107.7L503.1 107.2M503.1 107.2L505.1 106.7M505.1 106.7L507.1 106.3M507.1 106.3L509.0 105.8M509.0 105.8L510.9 105.4M510.9 105.4L512.8 104.9M512.8 104.9L514.6 104.5M536.3 110.2L538.1 109.7M538.1 109.7L539.9 109.1M539.9 109.1L541.6 108.6M541.6 108.6L543.3 108.1M543.3 108.1L544.9 107.7M544.9 107.7L546.6 107.2M546.6 107.2L548.1 106.7M548.1 106.7L549.7 106.3M549.7 106.3L551.3 105.8M551.3 105.8L552.8 105.4M552.8 105.4L554.2 104.9M554.2 104.9L555.7 104.5M583.7 109.7L585.0 109.1M585.0 109.1L586.3 108.6M586.3 108.6L587.6 108.1M587.6 108.1L588.8 107.7M588.8 107.7L590.0 107.2M590.0 107.2L591.2 106.7M591.2 106.7L592.3 106.3M592.3 106.3L593.5 105.8M593.5 105.8L594.6 105.4M594.6 105.4L595.7 104.9M595.7 104.9L596.8 104.5M629.3 109.7L630.2 109.1M630.2 109.1L631.0 108.6M631.0 108.6L631.8 108.1M631.8 108.1L632.6 107.7M632.6 107.7L633.4 107.2M633.4 107.2L634.2 106.7M634.2 106.7L635.0 106.3M635.0 106.3L635.7 105.8M635.7 105.8L636.4 105.4M636.4 105.4L637.1 104.9M637.1 104.9L637.8 104.5M675.0 109.7L675.4 109.1M675.4 109.1L675.8 108.6M675.8 108.6L676.1 108.1M676.1 108.1L676.5 107.7M676.5 107.7L676.9 107.2M676.9 107.2L677.2 106.7M677.2 106.7L677.6 106.3M677.6 106.3L677.9 105.8M677.9 105.8L678.3 105.4M678.3 105.4L678.6 104.9M678.6 104.9L678.9 104.5M766.2 109.7L765.7 109.1M765.7 109.1L765.2 108.6M765.2 108.6L764.7 108.1M764.7 108.1L764.2 107.7M764.2 107.7L763.7 107.2M763.7 107.2L763.3 106.7M763.3 106.7L762.8 106.3M762.8 106.3L762.4 105.8M762.4 105.8L761.9 105.4M761.9 105.4L761.5 104.9M761.5 104.9L761.1 104.5M811.8 109.7L810.9 109.1M810.9 109.1L809.9 108.6M809.9 108.6L809.0 108.1M809.0 108.1L808.1 107.7M808.1 107.7L807.2 107.2M807.2 107.2L806.3 106.7M806.3 106.7L805.4 106.3M805.4 106.3L804.6 105.8M804.6 105.8L803.8 105.4M803.8 105.4L803.0 104.9M803.0 104.9L802.1 104.5M857.5 109.7L856.0 109.1M856.0 109.1L854.7 108.6M854.7 108.6L853.3 108.1M853.3 108.1L851.9 107.7M851.9 107.7L850.6 107.2M850.6 107.2L849.3 106.7M849.3 106.7L848.1 106.3M848.1 106.3L846.8 105.8M846.8 105.8L845.6 105.4M845.6 105.4L844.4 104.9M844.4 104.9L843.2 104.5M905.0 110.2L903.1 109.7M903.1 109.7L901.2 109.1M901.2 109.1L899.4 108.6M899.4 108.6L897.6 108.1M897.6 108.1L895.8 107.7M895.8 107.7L894.1 107.2M894.1 107.2L892.4 106.7M892.4 106.7L890.7 106.3M890.7 106.3L889.0 105.8M889.0 105.8L887.4 105.4M887.4 105.4L885.9 104.9M885.9 104.9L884.3 104.5M953.5 110.7L951.1 110.2M951.1 110.2L948.7 109.7M948.7 109.7L946.4 109.1M946.4 109.1L944.1 108.6M944.1 108.6L941.9 108.1M941.9 108.1L939.7 107.7M939.7 107.7L937.5 107.2M937.5 107.2L935.4 106.7M935.4 106.7L933.3 106.3M933.3 106.3L931.3 105.8M931.3 105.8L929.3 105.4M929.3 105.4L927.3 104.9M927.3 104.9L925.4 104.5M978.4 106.7L975.9 106.3M975.9 106.3L973.5 105.8M973.5 105.8L971.1 105.4M971.1 105.4L968.8 104.9M968.8 104.9L966.5 104.5"/><path stroke-opacity="0.25" d="M464.4 106.3L528.3 106.3M528.3 106.3L592.3 106.3M592.3 106.3L656.2 106.3M656.2 106.3L720.2 106.3M720.2 106.3L784.2 106.3M784.2 106.3L848.1 106.3M848.1 106.3L912.1 106.3M912.1 106.3L976.0 106.3M321.6 108.2L388.0 108.2M388.0 108.2L454.5 108.2M454.5 108.2L521.0 108.2M521.0 108.2L587.5 108.2M587.5 108.2L653.9 108.2M653.9 108.2L720.4 108.2M720.4 108.2L786.9 108.2M786.9 108.2L853.4 108.2M853.4 108.2L919.9 108.2M919.9 108.2L986.3 108.2M167.0 110.2L236.2 110.2M236.2 110.2L305.4 110.2M305.4 110.2L374.6 110.2M374.6 110.2L443.8 110.2M443.8 110.2L513.0 110.2M513.0 110.2L582.2 110.2M582.2 110.2L651.5 110.2M651.5 110.2L720.7 110.2M720.7 110.2L789.9 110.2M789.9 110.2L859.1 110.2M859.1 110.2L928.3 110.2M928.3 110.2L997.5 110.2M71.4 112.5L143.5 112.5M143.5 112.5L215.7 112.5M215.7 112.5L287.9 112.5M287.9 112.5L360.1 112.5M360.1 112.5L432.2 112.5M432.2 112.5L504.4 112.5M937.4 112.5L1009.6 112.5M-32.8 114.9L42.6 114.9M42.6 114.9L118.0 114.9M118.0 114.9L193.4 114.9M193.4 114.9L268.8 114.9M-67.8 117.6L11.1 117.6M11.1 117.6L90.0 117.6M90.0 117.6L169.0 117.6M-23.5 120.5L59.3 120.5M-11.4 121.8L-2.4 121.0M-2.4 121.0L6.3 120.3M6.3 120.3L14.8 119.5M14.8 119.5L23.1 118.8M23.1 118.8L31.2 118.1M-9.0 127.0L0.6 126.1M0.6 126.1L10.0 125.2M10.0 125.2L19.1 124.3M19.1 124.3L28.0 123.5M28.0 123.5L36.6 122.6M36.6 122.6L45.0 121.8M45.0 121.8L53.3 121.0M53.3 121.0L61.3 120.3M61.3 120.3L69.1 119.5M69.1 119.5L76.8 118.8M76.8 118.8L84.3 118.1M84.3 118.1L91.6 117.4M91.6 117.4L98.7 116.7M69.3 125.2L77.7 124.3M77.7 124.3L85.8 123.5M85.8 123.5L93.7 122.6M93.7 122.6L101.5 121.8M101.5 121.8L109.0 121.0M109.0 121.0L116.4 120.3M116.4 120.3L123.5 119.5M123.5 119.5L130.5 118.8M130.5 118.8L137.4 118.1M137.4 118.1L144.1 117.4M144.1 117.4L150.6 116.7M150.6 116.7L157.0 116.1M157.0 116.1L163.2 115.4M143.7 123.5L150.9 122.6M150.9 122.6L157.9 121.8M157.9 121.8L164.7 121.0M164.7 121.0L171.4 120.3M171.4 120.3L177.9 119.5M177.9 119.5L184.3 118.8M184.3 118.8L190.5 118.1M190.5 118.1L196.6 117.4M196.6 117.4L202.5 116.7M202.5 116.7L208.3 116.1M208.3 116.1L214.0 115.4M214.0 115.4L219.5 114.8M219.5 114.8L224.9 114.2M214.3 121.8L220.4 121.0M220.4 121.0L226.4 120.3M226.4 120.3L232.3 119.5M232.3 119.5L238.0 118.8M238.0 118.8L243.6 118.1M243.6 118.1L249.1 117.4M249.1 117.4L254.4 116.7M254.4 116.7L259.6 116.1M259.6 116.1L264.7 115.4M264.7 115.4L269.7 114.8M269.7 114.8L274.5 114.2M274.5 114.2L279.3 113.6M279.3 113.6L284.0 113.0M281.5 120.3L286.7 119.5M286.7 119.5L291.8 118.8M291.8 118.8L296.7 118.1M296.7 118.1L301.5 117.4M301.5 117.4L306.3 116.7M306.3 116.7L310.9 116.1M310.9 116.1L315.4 115.4M315.4 115.4L319.8 114.8M319.8 114.8L324.2 114.2M324.2 114.2L328.4 113.6M328.4 113.6L332.5 113.0M332.5 113.0L336.6 112.4M341.1 119.5L345.5 118.8M345.5 118.8L349.8 118.1M349.8 118.1L354.0 117.4M354.0 117.4L358.2 116.7M358.2 116.7L362.2 116.1M362.2 116.1L366.1 115.4M366.1 115.4L370.0 114.8M370.0 114.8L373.8 114.2M373.8 114.2L377.5 113.6M377.5 113.6L381.1 113.0M381.1 113.0L384.6 112.4M384.6 112.4L388.1 111.8M402.9 118.1L406.5 117.4M406.5 117.4L410.1 116.7M410.1 116.7L413.5 116.1M413.5 116.1L416.9 115.4M416.9 115.4L420.2 114.8M420.2 114.8L423.4 114.2M423.4 114.2L426.6 113.6M426.6 113.6L429.6 113.0M429.6 113.0L432.7 112.4M432.7 112.4L435.6 111.8M435.6 111.8L438.5 111.3M459.0 117.4L462.0 116.7M462.0 116.7L464.8 116.1M464.8 116.1L467.6 115.4M467.6 115.4L470.3 114.8M470.3 114.8L473.0 114.2M473.0 114.2L475.6 113.6M475.6 113.6L478.2 113.0M478.2 113.0L480.7 112.4M480.7 112.4L483.2 111.8M483.2 111.8L485.6 111.3M485.6 111.3L487.9 110.7M511.5 117.4L513.8 116.7M513.8 116.7L516.1 116.1M516.1 116.1L518.3 115.4M518.3 115.4L520.5 114.8M520.5 114.8L522.6 114.2M522.6 114.2L524.7 113.6M524.7 113.6L526.8 113.0M526.8 113.0L528.7 112.4M528.7 112.4L530.7 111.8M530.7 111.8L532.6 111.3M532.6 111.3L534.5 110.7M534.5 110.7L536.3 110.2M565.7 116.7L567.4 116.1M567.4 116.1L569.1 115.4M569.1 115.4L570.7 114.8M570.7 114.8L572.3 114.2M572.3 114.2L573.8 113.6M573.8 113.6L575.3 113.0M575.3 113.0L576.8 112.4M576.8 112.4L578.2 111.8M578.2 111.8L579.6 111.3M579.6 111.3L581.0 110.7M581.0 110.7L582.4 110.2M582.4 110.2L583.7 109.7M618.7 116.1L619.8 115.4M619.8 115.4L620.9 114.8M620.9 114.8L621.9 114.2M621.9 114.2L622.9 113.6M622.9 113.6L623.9 113.0M623.9 113.0L624.8 112.4M624.8 112.4L625.8 111.8M625.8 111.8L626.7 111.3M626.7 111.3L627.6 110.7M627.6 110.7L628.5 110.2M628.5 110.2L629.3 109.7M670.0 116.1L670.5 115.4M670.5 115.4L671.0 114.8M671.0 114.8L671.5 114.2M671.5 114.2L672.0 113.6M672.0 113.6L672.4 113.0M672.4 113.0L672.9 112.4M672.9 112.4L673.3 111.8M673.3 111.8L673.7 111.3M673.7 111.3L674.2 110.7M674.2 110.7L674.6 110.2M674.6 110.2L675.0 109.7M772.6 116.1L772.0 115.4M772.0 115.4L771.4 114.8M771.4 114.8L770.7 114.2M770.7 114.2L770.1 113.6M770.1 113.6L769.5 113.0M769.5 113.0L769.0 112.4M769.0 112.4L768.4 111.8M768.4 111.8L767.8 111.3M767.8 111.3L767.3 110.7M767.3 110.7L766.7 110.2M766.7 110.2L766.2 109.7M825.2 116.7L824.0 116.1M824.0 116.1L822.7 115.4M822.7 115.4L821.5 114.8M821.5 114.8L820.4 114.2M820.4 114.2L819.2 113.6M819.2 113.6L818.1 113.0M818.1 113.0L817.0 112.4M817.0 112.4L815.9 111.8M815.9 111.8L814.9 111.3M814.9 111.3L813.8 110.7M813.8 110.7L812.8 110.2M812.8 110.2L811.8 109.7M877.1 116.7L875.3 116.1M875.3 116.1L873.5 115.4M873.5 115.4L871.7 114.8M871.7 114.8L870.0 114.2M870.0 114.2L868.3 113.6M868.3 113.6L866.7 113.0M866.7 113.0L865.0 112.4M865.0 112.4L863.5 111.8M863.5 111.8L861.9 111.3M861.9 111.3L860.4 110.7M860.4 110.7L858.9 110.2M858.9 110.2L857.5 109.7M931.5 117.4L929.0 116.7M929.0 116.7L926.6 116.1M926.6 116.1L924.2 115.4M924.2 115.4L921.9 114.8M921.9 114.8L919.6 114.2M919.6 114.2L917.4 113.6M917.4 113.6L915.2 113.0M915.2 113.0L913.1 112.4M913.1 112.4L911.0 111.8M911.0 111.8L909.0 111.3M909.0 111.3L907.0 110.7M907.0 110.7L905.0 110.2M980.9 116.7L977.9 116.1M977.9 116.1L974.9 115.4M974.9 115.4L972.0 114.8M972.0 114.8L969.2 114.2M969.2 114.2L966.5 113.6M966.5 113.6L963.8 113.0M963.8 113.0L961.1 112.4M961.1 112.4L958.5 111.8M958.5 111.8L956.0 111.3M956.0 111.3L953.5 110.7"/><path stroke-opacity="0.30" d="M504.4 112.5L576.6 112.5M576.6 112.5L648.8 112.5M648.8 112.5L720.9 112.5M720.9 112.5L793.1 112.5M793.1 112.5L865.3 112.5M865.3 112.5L937.4 112.5M268.8 114.9L344.2 114.9M344.2 114.9L419.6 114.9M419.6 114.9L495.0 114.9M495.0 114.9L570.4 114.9M570.4 114.9L645.8 114.9M645.8 114.9L721.2 114.9M721.2 114.9L796.6 114.9M796.6 114.9L872.0 114.9M872.0 114.9L947.4 114.9M947.4 114.9L1022.8 114.9M169.0 117.6L247.9 117.6M247.9 117.6L326.8 117.6M326.8 117.6L405.8 117.6M405.8 117.6L484.7 117.6M484.7 117.6L563.6 117.6M563.6 117.6L642.6 117.6M800.5 117.6L879.4 117.6M879.4 117.6L958.3 117.6M958.3 117.6L1037.3 117.6M59.3 120.5L142.2 120.5M142.2 120.5L225.0 120.5M225.0 120.5L307.8 120.5M-61.6 123.7L25.5 123.7M25.5 123.7L112.6 123.7M112.6 123.7L199.7 123.7M-12.1 127.3L79.7 127.3M-6.2 133.0L4.2 131.9M4.2 131.9L14.3 130.9M14.3 130.9L24.1 129.9M24.1 129.9L33.7 128.9M33.7 128.9L42.9 127.9M42.9 127.9L52.0 127.0M52.0 127.0L60.8 126.1M60.8 126.1L69.3 125.2M60.1 133.0L69.6 131.9M69.6 131.9L78.7 130.9M78.7 130.9L87.6 129.9M87.6 129.9L96.3 128.9M96.3 128.9L104.7 127.9M104.7 127.9L112.9 127.0M112.9 127.0L120.9 126.1M120.9 126.1L128.7 125.2M128.7 125.2L136.3 124.3M136.3 124.3L143.7 123.5M143.2 130.9L151.2 129.9M151.2 129.9L159.0 128.9M159.0 128.9L166.5 127.9M166.5 127.9L173.9 127.0M173.9 127.0L181.1 126.1M181.1 126.1L188.1 125.2M188.1 125.2L194.9 124.3M194.9 124.3L201.5 123.5M201.5 123.5L208.0 122.6M208.0 122.6L214.3 121.8M221.6 128.9L228.3 127.9M228.3 127.9L234.9 127.0M234.9 127.0L241.2 126.1M241.2 126.1L247.4 125.2M247.4 125.2L253.5 124.3M253.5 124.3L259.4 123.5M259.4 123.5L265.1 122.6M265.1 122.6L270.7 121.8M270.7 121.8L276.2 121.0M276.2 121.0L281.5 120.3M295.8 127.0L301.4 126.1M301.4 126.1L306.8 125.2M306.8 125.2L312.1 124.3M312.1 124.3L317.2 123.5M317.2 123.5L322.2 122.6M322.2 122.6L327.1 121.8M327.1 121.8L331.9 121.0M331.9 121.0L336.5 120.3M336.5 120.3L341.1 119.5M361.6 126.1L366.2 125.2M366.2 125.2L370.7 124.3M370.7 124.3L375.1 123.5M375.1 123.5L379.4 122.6M379.4 122.6L383.5 121.8M383.5 121.8L387.6 121.0M387.6 121.0L391.6 120.3M391.6 120.3L395.4 119.5M395.4 119.5L399.2 118.8M399.2 118.8L402.9 118.1M425.6 125.2L429.3 124.3M429.3 124.3L432.9 123.5M432.9 123.5L436.5 122.6M436.5 122.6L439.9 121.8M439.9 121.8L443.3 121.0M443.3 121.0L446.6 120.3M446.6 120.3L449.8 119.5M449.8 119.5L453.0 118.8M453.0 118.8L456.0 118.1M456.0 118.1L459.0 117.4M487.9 124.3L490.8 123.5M490.8 123.5L493.6 122.6M493.6 122.6L496.4 121.8M496.4 121.8L499.0 121.0M499.0 121.0L501.7 120.3M501.7 120.3L504.2 119.5M504.2 119.5L506.7 118.8M506.7 118.8L509.1 118.1M509.1 118.1L511.5 117.4M548.6 123.5L550.7 122.6M550.7 122.6L552.8 121.8M552.8 121.8L554.8 121.0M554.8 121.0L556.7 120.3M556.7 120.3L558.6 119.5M558.6 119.5L560.4 118.8M560.4 118.8L562.3 118.1M562.3 118.1L564.0 117.4M564.0 117.4L565.7 116.7M607.9 122.6L609.2 121.8M609.2 121.8L610.5 121.0M610.5 121.0L611.7 120.3M611.7 120.3L613.0 119.5M613.0 119.5L614.2 118.8M614.2 118.8L615.4 118.1M615.4 118.1L616.5 117.4M616.5 117.4L617.6 116.7M617.6 116.7L618.7 116.1M665.0 122.6L665.6 121.8M665.6 121.8L666.2 121.0M666.2 121.0L666.8 120.3M666.8 120.3L667.4 119.5M667.4 119.5L667.9 118.8M667.9 118.8L668.5 118.1M668.5 118.1L669.0 117.4M669.0 117.4L669.5 116.7M669.5 116.7L670.0 116.1M779.2 122.6L778.4 121.8M778.4 121.8L777.6 121.0M777.6 121.0L776.9 120.3M776.9 120.3L776.1 119.5M776.1 119.5L775.4 118.8M775.4 118.8L774.7 118.1M774.7 118.1L774.0 117.4M774.0 117.4L773.3 116.7M773.3 116.7L772.6 116.1M837.9 123.5L836.4 122.6M836.4 122.6L834.8 121.8M834.8 121.8L833.4 121.0M833.4 121.0L831.9 120.3M831.9 120.3L830.5 119.5M830.5 119.5L829.1 118.8M829.1 118.8L827.8 118.1M827.8 118.1L826.5 117.4M826.5 117.4L825.2 116.7M895.8 123.5L893.5 122.6M893.5 122.6L891.3 121.8M891.3 121.8L889.1 121.0M889.1 121.0L887.0 120.3M887.0 120.3L884.9 119.5M884.9 119.5L882.9 118.8M882.9 118.8L880.9 118.1M880.9 118.1L879.0 117.4M879.0 117.4L877.1 116.7M956.7 124.3L953.6 123.5M953.6 123.5L950.6 122.6M950.6 122.6L947.7 121.8M947.7 121.8L944.8 121.0M944.8 121.0L942.0 120.3M942.0 120.3L939.3 119.5M939.3 119.5L936.6 118.8M936.6 118.8L934.0 118.1M934.0 118.1L931.5 117.4"/><path stroke-opacity="0.35" d="M642.6 117.6L721.5 117.6M721.5 117.6L800.5 117.6M307.8 120.5L390.6 120.5M390.6 120.5L473.4 120.5M473.4 120.5L556.2 120.5M556.2 120.5L639.0 120.5M639.0 120.5L721.9 120.5M721.9 120.5L804.7 120.5M804.7 120.5L887.5 120.5M887.5 120.5L970.3 120.5M970.3 120.5L1053.1 120.5M199.7 123.7L286.8 123.7M286.8 123.7L373.9 123.7M373.9 123.7L460.9 123.7M460.9 123.7L548.0 123.7M548.0 123.7L635.1 123.7M809.3 123.7L896.4 123.7M896.4 123.7L983.5 123.7M79.7 127.3L171.6 127.3M171.6 127.3L263.4 127.3M263.4 127.3L355.3 127.3M-54.0 131.2L43.1 131.2M43.1 131.2L140.3 131.2M-101.0 135.7L2.1 135.7M-14.6 141.6L-2.9 140.2M-2.9 140.2L8.5 138.9M8.5 138.9L19.4 137.7M19.4 137.7L30.1 136.4M30.1 136.4L40.4 135.3M40.4 135.3L50.4 134.1M50.4 134.1L60.1 133.0M69.8 140.2L80.0 138.9M80.0 138.9L89.9 137.7M89.9 137.7L99.4 136.4M99.4 136.4L108.7 135.3M108.7 135.3L117.7 134.1M117.7 134.1L126.4 133.0M126.4 133.0L134.9 131.9M134.9 131.9L143.2 130.9M160.3 137.7L168.8 136.4M168.8 136.4L177.0 135.3M177.0 135.3L185.0 134.1M185.0 134.1L192.8 133.0M192.8 133.0L200.3 131.9M200.3 131.9L207.6 130.9M207.6 130.9L214.7 129.9M214.7 129.9L221.6 128.9M245.4 135.3L252.3 134.1M252.3 134.1L259.1 133.0M259.1 133.0L265.7 131.9M265.7 131.9L272.0 130.9M272.0 130.9L278.2 129.9M278.2 129.9L284.3 128.9M284.3 128.9L290.1 127.9M290.1 127.9L295.8 127.0M325.4 133.0L331.0 131.9M331.0 131.9L336.5 130.9M336.5 130.9L341.8 129.9M341.8 129.9L346.9 128.9M346.9 128.9L351.9 127.9M351.9 127.9L356.8 127.0M356.8 127.0L361.6 126.1M396.4 131.9L400.9 130.9M400.9 130.9L405.3 129.9M405.3 129.9L409.6 128.9M409.6 128.9L413.7 127.9M413.7 127.9L417.8 127.0M417.8 127.0L421.7 126.1M421.7 126.1L425.6 125.2M465.3 130.9L468.8 129.9M468.8 129.9L472.2 128.9M472.2 128.9L475.5 127.9M475.5 127.9L478.7 127.0M478.7 127.0L481.9 126.1M481.9 126.1L484.9 125.2M484.9 125.2L487.9 124.3M532.4 129.9L534.9 128.9M534.9 128.9L537.3 127.9M537.3 127.9L539.7 127.0M539.7 127.0L542.0 126.1M542.0 126.1L544.3 125.2M544.3 125.2L546.5 124.3M546.5 124.3L548.6 123.5M595.9 129.9L597.5 128.9M597.5 128.9L599.1 127.9M599.1 127.9L600.7 127.0M600.7 127.0L602.2 126.1M602.2 126.1L603.7 125.2M603.7 125.2L605.1 124.3M605.1 124.3L606.5 123.5M606.5 123.5L607.9 122.6M660.2 128.9L660.9 127.9M660.9 127.9L661.6 127.0M661.6 127.0L662.4 126.1M662.4 126.1L663.0 125.2M663.0 125.2L663.7 124.3M663.7 124.3L664.4 123.5M664.4 123.5L665.0 122.6M786.5 129.9L785.5 128.9M785.5 128.9L784.5 127.9M784.5 127.9L783.6 127.0M783.6 127.0L782.7 126.1M782.7 126.1L781.8 125.2M781.8 125.2L780.9 124.3M780.9 124.3L780.1 123.5M780.1 123.5L779.2 122.6M850.0 129.9L848.1 128.9M848.1 128.9L846.3 127.9M846.3 127.9L844.6 127.0M844.6 127.0L842.8 126.1M842.8 126.1L841.1 125.2M841.1 125.2L839.5 124.3M839.5 124.3L837.9 123.5M916.4 130.9L913.5 129.9M913.5 129.9L910.8 128.9M910.8 128.9L908.1 127.9M908.1 127.9L905.5 127.0M905.5 127.0L903.0 126.1M903.0 126.1L900.5 125.2M900.5 125.2L898.1 124.3M898.1 124.3L895.8 123.5M980.8 130.9L977.1 129.9M977.1 129.9L973.4 128.9M973.4 128.9L969.9 127.9M969.9 127.9L966.5 127.0M966.5 127.0L963.1 126.1M963.1 126.1L959.9 125.2M959.9 125.2L956.7 124.3"/><path stroke-opacity="0.40" d="M635.1 123.7L722.2 123.7M722.2 123.7L809.3 123.7M355.3 127.3L447.1 127.3M447.1 127.3L539.0 127.3M539.0 127.3L630.8 127.3M630.8 127.3L722.7 127.3M722.7 127.3L814.5 127.3M814.5 127.3L906.3 127.3M906.3 127.3L998.2 127.3M140.3 131.2L237.4 131.2M237.4 131.2L334.6 131.2M334.6 131.2L431.7 131.2M2.1 135.7L105.1 135.7M105.1 135.7L208.2 135.7M-44.4 140.8L65.4 140.8M-11.7 150.6L1.2 149.0M1.2 149.0L13.6 147.4M13.6 147.4L25.6 145.8M25.6 145.8L37.3 144.4M37.3 144.4L48.5 142.9M48.5 142.9L59.3 141.6M59.3 141.6L69.8 140.2M92.7 147.4L103.3 145.8M103.3 145.8L113.6 144.4M113.6 144.4L123.6 142.9M123.6 142.9L133.2 141.6M133.2 141.6L142.5 140.2M142.5 140.2L151.6 138.9M151.6 138.9L160.3 137.7M190.0 144.4L198.7 142.9M198.7 142.9L207.1 141.6M207.1 141.6L215.2 140.2M215.2 140.2L223.1 138.9M223.1 138.9L230.8 137.7M230.8 137.7L238.2 136.4M238.2 136.4L245.4 135.3M281.0 141.6L288.0 140.2M288.0 140.2L294.7 138.9M294.7 138.9L301.2 137.7M301.2 137.7L307.5 136.4M307.5 136.4L313.7 135.3M313.7 135.3L319.6 134.1M319.6 134.1L325.4 133.0M360.7 140.2L366.2 138.9M366.2 138.9L371.7 137.7M371.7 137.7L376.9 136.4M376.9 136.4L382.0 135.3M382.0 135.3L386.9 134.1M386.9 134.1L391.7 133.0M391.7 133.0L396.4 131.9M442.1 137.7L446.3 136.4M446.3 136.4L450.3 135.3M450.3 135.3L454.2 134.1M454.2 134.1L458.0 133.0M458.0 133.0L461.7 131.9M461.7 131.9L465.3 130.9M512.5 137.7L515.6 136.4M515.6 136.4L518.6 135.3M518.6 135.3L521.5 134.1M521.5 134.1L524.4 133.0M524.4 133.0L527.1 131.9M527.1 131.9L529.8 130.9M529.8 130.9L532.4 129.9M585.0 136.4L586.9 135.3M586.9 135.3L588.8 134.1M588.8 134.1L590.7 133.0M590.7 133.0L592.5 131.9M592.5 131.9L594.2 130.9M594.2 130.9L595.9 129.9M654.4 136.4L655.3 135.3M655.3 135.3L656.1 134.1M656.1 134.1L657.0 133.0M657.0 133.0L657.8 131.9M657.8 131.9L658.6 130.9M658.6 130.9L659.4 129.9M659.4 129.9L660.2 128.9M793.1 136.4L791.9 135.3M791.9 135.3L790.8 134.1M790.8 134.1L789.6 133.0M789.6 133.0L788.6 131.9M788.6 131.9L787.5 130.9M787.5 130.9L786.5 129.9M862.5 136.4L860.2 135.3M860.2 135.3L858.1 134.1M858.1 134.1L856.0 133.0M856.0 133.0L853.9 131.9M853.9 131.9L851.9 130.9M851.9 130.9L850.0 129.9M935.2 137.7L931.8 136.4M931.8 136.4L928.5 135.3M928.5 135.3L925.4 134.1M925.4 134.1L922.3 133.0M922.3 133.0L919.3 131.9M919.3 131.9L916.4 130.9"/><path stroke-opacity="0.45" d="M431.7 131.2L528.8 131.2M528.8 131.2L626.0 131.2M626.0 131.2L723.1 131.2M723.1 131.2L820.3 131.2M820.3 131.2L917.4 131.2M917.4 131.2L1014.5 131.2M208.2 135.7L311.3 135.7M311.3 135.7L414.4 135.7M414.4 135.7L517.5 135.7M517.5 135.7L620.6 135.7M826.7 135.7L929.8 135.7M929.8 135.7L1032.9 135.7M65.4 140.8L175.2 140.8M175.2 140.8L285.0 140.8M-97.3 146.5L20.2 146.5M20.2 146.5L137.6 146.5M20.0 157.8L33.3 155.9M33.3 155.9L46.0 154.1M46.0 154.1L58.3 152.3M58.3 152.3L70.2 150.6M70.2 150.6L81.6 149.0M81.6 149.0L92.7 147.4M131.0 154.1L141.7 152.3M141.7 152.3L152.1 150.6M152.1 150.6L162.1 149.0M162.1 149.0L171.7 147.4M171.7 147.4L181.0 145.8M181.0 145.8L190.0 144.4M234.0 150.6L242.5 149.0M242.5 149.0L250.8 147.4M250.8 147.4L258.7 145.8M258.7 145.8L266.4 144.4M266.4 144.4L273.8 142.9M273.8 142.9L281.0 141.6M329.8 147.4L336.4 145.8M336.4 145.8L342.8 144.4M342.8 144.4L348.9 142.9M348.9 142.9L354.9 141.6M354.9 141.6L360.7 140.2M414.1 145.8L419.1 144.4M419.1 144.4L424.0 142.9M424.0 142.9L428.8 141.6M428.8 141.6L433.4 140.2M433.4 140.2L437.8 138.9M437.8 138.9L442.1 137.7M495.5 144.4L499.1 142.9M499.1 142.9L502.7 141.6M502.7 141.6L506.1 140.2M506.1 140.2L509.3 138.9M509.3 138.9L512.5 137.7M574.3 142.9L576.5 141.6M576.5 141.6L578.8 140.2M578.8 140.2L580.9 138.9M580.9 138.9L583.0 137.7M583.0 137.7L585.0 136.4M649.4 142.9L650.4 141.6M650.4 141.6L651.5 140.2M651.5 140.2L652.5 138.9M652.5 138.9L653.4 137.7M653.4 137.7L654.4 136.4M799.6 142.9L798.2 141.6M798.2 141.6L796.9 140.2M796.9 140.2L795.6 138.9M795.6 138.9L794.3 137.7M794.3 137.7L793.1 136.4M874.7 142.9L872.1 141.6M872.1 141.6L869.6 140.2M869.6 140.2L867.1 138.9M867.1 138.9L864.7 137.7M864.7 137.7L862.5 136.4M953.8 144.4L949.8 142.9M949.8 142.9L946.0 141.6M946.0 141.6L942.3 140.2M942.3 140.2L938.7 138.9M938.7 138.9L935.2 137.7"/><path stroke-opacity="0.50" d="M620.6 135.7L723.6 135.7M723.6 135.7L826.7 135.7M285.0 140.8L394.8 140.8M394.8 140.8L504.6 140.8M504.6 140.8L614.4 140.8M614.4 140.8L724.2 140.8M724.2 140.8L834.0 140.8M834.0 140.8L943.8 140.8M943.8 140.8L1053.6 140.8M137.6 146.5L255.1 146.5M255.1 146.5L372.5 146.5M-31.9 153.2L94.4 153.2M-8.2 161.8L6.2 159.8M6.2 159.8L20.0 157.8M70.6 164.0L83.7 161.8M83.7 161.8L96.2 159.8M96.2 159.8L108.3 157.8M108.3 157.8L119.9 155.9M119.9 155.9L131.0 154.1M186.3 159.8L196.5 157.8M196.5 157.8L206.4 155.9M206.4 155.9L216.0 154.1M216.0 154.1L225.1 152.3M225.1 152.3L234.0 150.6M293.0 155.9L300.9 154.1M300.9 154.1L308.5 152.3M308.5 152.3L315.9 150.6M315.9 150.6L323.0 149.0M323.0 149.0L329.8 147.4M385.9 154.1L392.0 152.3M392.0 152.3L397.8 150.6M397.8 150.6L403.4 149.0M403.4 149.0L408.8 147.4M408.8 147.4L414.1 145.8M475.4 152.3L479.7 150.6M479.7 150.6L483.9 149.0M483.9 149.0L487.9 147.4M487.9 147.4L491.8 145.8M491.8 145.8L495.5 144.4M561.6 150.6L564.3 149.0M564.3 149.0L566.9 147.4M566.9 147.4L569.4 145.8M569.4 145.8L571.9 144.4M571.9 144.4L574.3 142.9M644.7 149.0L646.0 147.4M646.0 147.4L647.1 145.8M647.1 145.8L648.3 144.4M648.3 144.4L649.4 142.9M807.3 150.6L805.6 149.0M805.6 149.0L804.0 147.4M804.0 147.4L802.5 145.8M802.5 145.8L801.0 144.4M801.0 144.4L799.6 142.9M889.2 150.6L886.1 149.0M886.1 149.0L883.1 147.4M883.1 147.4L880.2 145.8M880.2 145.8L877.4 144.4M877.4 144.4L874.7 142.9M975.8 152.3L971.1 150.6M971.1 150.6L966.5 149.0M966.5 149.0L962.1 147.4M962.1 147.4L957.9 145.8M957.9 145.8L953.8 144.4"/><path stroke-opacity="0.55" d="M372.5 146.5L490.0 146.5M490.0 146.5L607.4 146.5M607.4 146.5L724.9 146.5M724.9 146.5L842.4 146.5M842.4 146.5L959.8 146.5M959.8 146.5L1077.3 146.5M94.4 153.2L220.7 153.2M220.7 153.2L346.9 153.2M-92.3 160.9L44.2 160.9M44.2 160.9L180.6 160.9M-3.6 176.2L12.6 173.5M12.6 173.5L28.0 171.0M28.0 171.0L42.9 168.5M42.9 168.5L57.0 166.2M57.0 166.2L70.6 164.0M140.7 168.5L152.8 166.2M152.8 166.2L164.4 164.0M164.4 164.0L175.6 161.8M175.6 161.8L186.3 159.8M258.2 164.0L267.4 161.8M267.4 161.8L276.3 159.8M276.3 159.8L284.8 157.8M284.8 157.8L293.0 155.9M359.3 161.8L366.3 159.8M366.3 159.8L373.1 157.8M373.1 157.8L379.6 155.9M379.6 155.9L385.9 154.1M456.4 159.8L461.4 157.8M461.4 157.8L466.2 155.9M466.2 155.9L470.9 154.1M470.9 154.1L475.4 152.3M549.7 157.8L552.8 155.9M552.8 155.9L555.8 154.1M555.8 154.1L558.8 152.3M558.8 152.3L561.6 150.6M637.9 157.8L639.4 155.9M639.4 155.9L640.8 154.1M640.8 154.1L642.2 152.3M642.2 152.3L643.5 150.6M643.5 150.6L644.7 149.0M814.5 157.8L812.6 155.9M812.6 155.9L810.7 154.1M810.7 154.1L809.0 152.3M809.0 152.3L807.3 150.6M902.8 157.8L899.2 155.9M899.2 155.9L895.7 154.1M895.7 154.1L892.4 152.3M892.4 152.3L889.2 150.6M980.7 154.1L975.8 152.3"/><path stroke-opacity="0.60" d="M346.9 153.2L473.2 153.2M473.2 153.2L599.4 153.2M599.4 153.2L725.7 153.2M725.7 153.2L851.9 153.2M851.9 153.2L978.2 153.2M180.6 160.9L317.1 160.9M-14.9 169.9L133.6 169.9M-20.6 179.0L-3.6 176.2M71.2 181.9L86.4 179.0M86.4 179.0L100.9 176.2M100.9 176.2L114.8 173.5M114.8 173.5L128.0 171.0M128.0 171.0L140.7 168.5M217.0 173.5L228.0 171.0M228.0 171.0L238.5 168.5M238.5 168.5L248.5 166.2M248.5 166.2L258.2 164.0M327.9 171.0L336.3 168.5M336.3 168.5L344.3 166.2M344.3 166.2L351.9 164.0M351.9 164.0L359.3 161.8M434.1 168.5L440.0 166.2M440.0 166.2L445.7 164.0M445.7 164.0L451.1 161.8M451.1 161.8L456.4 159.8M535.7 166.2L539.4 164.0M539.4 164.0L543.0 161.8M543.0 161.8L546.4 159.8M546.4 159.8L549.7 157.8M633.2 164.0L634.8 161.8M634.8 161.8L636.4 159.8M636.4 159.8L637.9 157.8M820.7 164.0L818.5 161.8M818.5 161.8L816.5 159.8M816.5 159.8L814.5 157.8M918.7 166.2L914.4 164.0M914.4 164.0L910.4 161.8M910.4 161.8L906.5 159.8M906.5 159.8L902.8 157.8"/><path stroke-opacity="0.65" d="M317.1 160.9L453.6 160.9M453.6 160.9L590.1 160.9M590.1 160.9L726.6 160.9M726.6 160.9L863.1 160.9M863.1 160.9L999.5 160.9M133.6 169.9L282.1 169.9M-85.5 180.7L77.4 180.7M2.3 195.2L20.9 191.6M20.9 191.6L38.5 188.2M38.5 188.2L55.3 185.0M55.3 185.0L71.2 181.9M167.6 185.0L180.9 181.9M180.9 181.9L193.5 179.0M193.5 179.0L205.5 176.2M205.5 176.2L217.0 173.5M290.5 181.9L300.5 179.0M300.5 179.0L310.1 176.2M310.1 176.2L319.2 173.5M319.2 173.5L327.9 171.0M414.6 176.2L421.4 173.5M421.4 173.5L427.9 171.0M427.9 171.0L434.1 168.5M523.6 173.5L527.8 171.0M527.8 171.0L531.9 168.5M531.9 168.5L535.7 166.2M625.8 173.5L627.8 171.0M627.8 171.0L629.7 168.5M629.7 168.5L631.5 166.2M631.5 166.2L633.2 164.0M830.3 173.5L827.7 171.0M827.7 171.0L825.3 168.5M825.3 168.5L822.9 166.2M822.9 166.2L820.7 164.0M932.5 173.5L927.7 171.0M927.7 171.0L923.1 168.5M923.1 168.5L918.7 166.2"/><path stroke-opacity="0.70" d="M282.1 169.9L430.6 169.9M430.6 169.9L579.1 169.9M579.1 169.9L727.6 169.9M727.6 169.9L876.1 169.9M876.1 169.9L1024.7 169.9M77.4 180.7L240.3 180.7M-171.1 193.8L9.2 193.8M-17.3 198.9L2.3 195.2M107.5 198.9L123.7 195.2M123.7 195.2L139.1 191.6M139.1 191.6L153.7 188.2M153.7 188.2L167.6 185.0M257.3 191.6L269.0 188.2M269.0 188.2L280.0 185.0M280.0 185.0L290.5 181.9M384.2 188.2L392.3 185.0M392.3 185.0L400.1 181.9M400.1 181.9L407.6 179.0M407.6 179.0L414.6 176.2M504.7 185.0L509.8 181.9M509.8 181.9L514.6 179.0M514.6 179.0L519.2 176.2M519.2 176.2L523.6 173.5M619.4 181.9L621.6 179.0M621.6 179.0L623.8 176.2M623.8 176.2L625.8 173.5M838.7 181.9L835.7 179.0M835.7 179.0L832.9 176.2M832.9 176.2L830.3 173.5M954.1 185.0L948.3 181.9M948.3 181.9L942.8 179.0M942.8 179.0L937.5 176.2M937.5 176.2L932.5 173.5"/><path stroke-opacity="0.75" d="M240.3 180.7L403.1 180.7M403.1 180.7L566.0 180.7M891.8 180.7L1054.6 180.7M9.2 193.8L189.5 193.8M52.8 211.6L72.1 207.1M72.1 207.1L90.3 202.9M90.3 202.9L107.5 198.9M218.5 202.9L232.2 198.9M232.2 198.9L245.1 195.2M245.1 195.2L257.3 191.6M356.9 198.9L366.5 195.2M366.5 195.2L375.5 191.6M375.5 191.6L384.2 188.2M487.8 195.2L493.7 191.6M493.7 191.6L499.4 188.2M499.4 188.2L504.7 185.0M611.9 191.6L614.6 188.2M614.6 188.2L617.0 185.0M617.0 185.0L619.4 181.9M848.4 191.6L845.0 188.2M845.0 188.2L841.7 185.0M841.7 185.0L838.7 181.9M973.3 195.2L966.6 191.6M966.6 191.6L960.2 188.2M960.2 188.2L954.1 185.0"/><path stroke-opacity="0.80" d="M566.0 180.7L728.9 180.7M728.9 180.7L891.8 180.7M189.5 193.8L369.8 193.8M910.7 193.8L1091.0 193.8M-75.3 210.1L126.6 210.1M-12.6 226.8L10.6 221.4M10.6 221.4L32.4 216.3M32.4 216.3L52.8 211.6M172.5 216.3L188.8 211.6M188.8 211.6L204.1 207.1M204.1 207.1L218.5 202.9M324.7 211.6L336.0 207.1M336.0 207.1L346.8 202.9M346.8 202.9L356.9 198.9M468.0 207.1L475.0 202.9M475.0 202.9L481.6 198.9M481.6 198.9L487.8 195.2M603.2 202.9L606.3 198.9M606.3 198.9L609.2 195.2M609.2 195.2L611.9 191.6M859.7 202.9L855.7 198.9M855.7 198.9L851.9 195.2M851.9 195.2L848.4 191.6M980.4 198.9L973.3 195.2"/><path stroke-opacity="0.85" d="M369.8 193.8L550.1 193.8M550.1 193.8L730.4 193.8M730.4 193.8L910.7 193.8M126.6 210.1L328.5 210.1M117.1 232.5L136.8 226.8M136.8 226.8L155.2 221.4M155.2 221.4L172.5 216.3M286.1 226.8L299.8 221.4M299.8 221.4L312.6 216.3M312.6 216.3L324.7 211.6M452.8 216.3L460.6 211.6M460.6 211.6L468.0 207.1M592.9 216.3L596.6 211.6M596.6 211.6L600.0 207.1M600.0 207.1L603.2 202.9M873.2 216.3L868.4 211.6M868.4 211.6L863.9 207.1M863.9 207.1L859.7 202.9"/><path stroke-opacity="0.90" d="M328.5 210.1L530.4 210.1M530.4 210.1L732.3 210.1M732.3 210.1L934.2 210.1M934.2 210.1L1136.1 210.1M49.0 252.4L73.4 245.3M73.4 245.3L96.0 238.7M96.0 238.7L117.1 232.5M255.9 238.7L271.5 232.5M271.5 232.5L286.1 226.8M426.0 232.5L435.5 226.8M435.5 226.8L444.4 221.4M444.4 221.4L452.8 216.3M584.9 226.8L589.0 221.4M589.0 221.4L592.9 216.3M883.6 226.8L878.2 221.4M878.2 221.4L873.2 216.3"/><path stroke-opacity="0.95" d="M-5.6 268.3L22.8 260.0M22.8 260.0L49.0 252.4M201.6 260.0L221.1 252.4M221.1 252.4L239.1 245.3M239.1 245.3L255.9 238.7M393.1 252.4L404.9 245.3M404.9 245.3L415.8 238.7M415.8 238.7L426.0 232.5M570.7 245.3L575.7 238.7M575.7 238.7L580.5 232.5M580.5 232.5L584.9 226.8M902.2 245.3L895.6 238.7M895.6 238.7L889.4 232.5M889.4 232.5L883.6 226.8"/><path stroke-opacity="1.00" d="M-58.7 258.0L206.8 258.0M206.8 258.0L472.4 258.0M472.4 258.0L737.9 258.0M737.9 258.0L1003.5 258.0M-203.4 295.4L111.8 295.4M111.8 295.4L427.0 295.4M427.0 295.4L742.3 295.4M742.3 295.4L1057.5 295.4M-26.9 350.0L360.9 350.0M360.9 350.0L748.6 350.0M748.6 350.0L1136.4 350.0M-248.6 437.2L255.1 437.2M255.1 437.2L758.8 437.2M758.8 437.2L1262.5 437.2M-35.0 353.1L5.9 337.1M5.9 337.1L42.5 322.6M42.5 322.6L75.6 309.6M75.6 309.6L105.5 297.9M105.5 297.9L132.8 287.1M132.8 287.1L157.7 277.3M157.7 277.3L180.6 268.3M180.6 268.3L201.6 260.0M-31.9 509.1L28.6 472.6M28.6 472.6L80.0 441.6M80.0 441.6L124.2 414.8M124.2 414.8L162.7 391.6M162.7 391.6L196.5 371.2M196.5 371.2L226.4 353.1M226.4 353.1L253.0 337.1M253.0 337.1L276.8 322.6M276.8 322.6L298.3 309.6M298.3 309.6L317.8 297.9M317.8 297.9L335.6 287.1M335.6 287.1L351.8 277.3M351.8 277.3L366.7 268.3M366.7 268.3L380.5 260.0M380.5 260.0L393.1 252.4M293.4 605.7L334.1 552.7M334.1 552.7L367.7 509.1M367.7 509.1L395.8 472.6M395.8 472.6L419.7 441.6M419.7 441.6L440.2 414.8M440.2 414.8L458.1 391.6M458.1 391.6L473.8 371.2M473.8 371.2L487.7 353.1M487.7 353.1L500.0 337.1M500.0 337.1L511.1 322.6M511.1 322.6L521.1 309.6M521.1 309.6L530.2 297.9M530.2 297.9L538.5 287.1M538.5 287.1L546.0 277.3M546.0 277.3L552.9 268.3M552.9 268.3L559.3 260.0M559.3 260.0L565.2 252.4M565.2 252.4L570.7 245.3M979.8 322.6L966.7 309.6M966.7 309.6L954.9 297.9M954.9 297.9L944.2 287.1M944.2 287.1L934.3 277.3M934.3 277.3L925.3 268.3M925.3 268.3L917.0 260.0M917.0 260.0L909.3 252.4M909.3 252.4L902.2 245.3"/></g><line x1="-50" y1="230.77" x2="1023" y2="230.77" stroke="#5b7438" stroke-width="1.5"/></g><polygon points="844.26,75.41 843.90,75.09 843.05,137.19 843.39,138.71" fill="rgb(60,62,63)" stroke="rgb(60,62,63)" stroke-width="0.5"/><polygon points="843.90,75.09 839.45,74.77 838.65,135.74 843.05,137.19" fill="rgb(64,66,67)" stroke="rgb(64,66,67)" stroke-width="0.5"/><polygon points="839.45,74.77 831.29,74.48 830.55,134.39 838.65,135.74" fill="rgb(74,76,77)" stroke="rgb(74,76,77)" stroke-width="0.5"/><polygon points="831.29,74.48 819.89,74.22 819.23,133.18 830.55,134.39" fill="rgb(100,102,103)" stroke="rgb(100,102,103)" stroke-width="0.5"/><polygon points="819.89,74.22 805.77,74.00 805.22,132.16 819.23,133.18" fill="rgb(121,123,124)" stroke="rgb(121,123,124)" stroke-width="0.5"/><polygon points="805.77,74.00 789.49,73.82 789.04,131.34 805.22,132.16" fill="rgb(137,139,140)" stroke="rgb(137,139,140)" stroke-width="0.5"/><polygon points="789.49,73.82 771.61,73.69 771.27,130.74 789.04,131.34" fill="rgb(151,153,154)" stroke="rgb(151,153,154)" stroke-width="0.5"/><polygon points="771.61,73.69 752.68,73.62 752.45,130.37 771.27,130.74" fill="rgb(154,156,157)" stroke="rgb(154,156,157)" stroke-width="0.5"/><polygon points="752.68,73.62 733.26,73.59 733.14,130.25 752.45,130.37" fill="rgb(158,160,161)" stroke="rgb(158,160,161)" stroke-width="0.5"/><polygon points="733.26,73.59 713.90,73.62 713.90,130.37 733.14,130.25" fill="rgb(158,160,161)" stroke="rgb(158,160,161)" stroke-width="0.5"/><polygon points="713.90,73.62 695.16,73.69 695.27,130.74 713.90,130.37" fill="rgb(154,156,157)" stroke="rgb(154,156,157)" stroke-width="0.5"/><polygon points="695.16,73.69 677.58,73.82 677.81,131.34 695.27,130.74" fill="rgb(151,153,154)" stroke="rgb(151,153,154)" stroke-width="0.5"/><polygon points="677.58,73.82 661.73,74.00 662.05,132.16 677.81,131.34" fill="rgb(137,139,140)" stroke="rgb(137,139,140)" stroke-width="0.5"/><polygon points="661.73,74.00 648.15,74.22 648.56,133.18 662.05,132.16" fill="rgb(121,123,124)" stroke="rgb(121,123,124)" stroke-width="0.5"/><polygon points="648.15,74.22 637.38,74.48 637.87,134.39 648.56,133.18" fill="rgb(100,102,103)" stroke="rgb(100,102,103)" stroke-width="0.5"/><polygon points="637.38,74.48 629.92,74.77 630.47,135.74 637.87,134.39" fill="rgb(74,76,77)" stroke="rgb(74,76,77)" stroke-width="0.5"/><polygon points="629.92,74.77 626.23,75.09 626.81,137.19 630.47,135.74" fill="rgb(64,66,67)" stroke="rgb(64,66,67)" stroke-width="0.5"/><path d="M843.90 75.09L843.05 137.19M839.45 74.77L838.65 135.74M831.29 74.48L830.55 134.39M819.89 74.22L819.23 133.18M805.77 74.00L805.22 132.16M789.49 73.82L789.04 131.34M771.61 73.69L771.27 130.74M752.68 73.62L752.45 130.37M733.26 73.59L733.14 130.25M713.90 73.62L713.90 130.37M695.16 73.69L695.27 130.74M677.58 73.82L677.81 131.34M661.73 74.00L662.05 132.16M648.15 74.22L648.56 133.18M637.38 74.48L637.87 134.39M629.92 74.77L630.47 135.74M626.23 75.09L626.81 137.19" stroke="#151515" stroke-opacity="0.7" stroke-width="1" fill="none"/><polygon points="738.35,77.81 773.38,77.75 760.68,76.86 737.26,76.90" fill="rgb(118,120,121)" stroke="rgb(118,120,121)" stroke-width="0.5"/><polygon points="773.38,77.75 806.29,77.57 782.82,76.75 760.68,76.86" fill="rgb(113,115,116)" stroke="rgb(113,115,116)" stroke-width="0.5"/><polygon points="806.29,77.57 835.34,77.29 802.62,76.57 782.82,76.75" fill="rgb(108,110,111)" stroke="rgb(108,110,111)" stroke-width="0.5"/><polygon points="835.34,77.29 859.15,76.92 819.19,76.33 802.62,76.57" fill="rgb(104,106,107)" stroke="rgb(104,106,107)" stroke-width="0.5"/><polygon points="859.15,76.92 876.81,76.50 831.87,76.05 819.19,76.33" fill="rgb(99,101,102)" stroke="rgb(99,101,102)" stroke-width="0.5"/><polygon points="876.81,76.50 887.89,76.03 840.27,75.74 831.87,76.05" fill="rgb(93,95,96)" stroke="rgb(93,95,96)" stroke-width="0.5"/><polygon points="887.89,76.03 892.35,75.56 844.26,75.41 840.27,75.74" fill="rgb(80,82,83)" stroke="rgb(80,82,83)" stroke-width="0.5"/><polygon points="892.35,75.56 890.54,75.09 843.90,75.09 844.26,75.41" fill="rgb(67,69,70)" stroke="rgb(67,69,70)" stroke-width="0.5"/><polygon points="890.54,75.09 883.00,74.64 839.45,74.77 843.90,75.09" fill="rgb(60,62,63)" stroke="rgb(60,62,63)" stroke-width="0.5"/><polygon points="883.00,74.64 870.45,74.23 831.29,74.48 839.45,74.77" fill="rgb(60,62,63)" stroke="rgb(60,62,63)" stroke-width="0.5"/><polygon points="870.45,74.23 853.64,73.88 819.89,74.22 831.29,74.48" fill="rgb(60,62,63)" stroke="rgb(60,62,63)" stroke-width="0.5"/><polygon points="853.64,73.88 833.38,73.58 805.77,74.00 819.89,74.22" fill="rgb(65,67,68)" stroke="rgb(65,67,68)" stroke-width="0.5"/><polygon points="833.38,73.58 810.41,73.34 789.49,73.82 805.77,74.00" fill="rgb(70,72,73)" stroke="rgb(70,72,73)" stroke-width="0.5"/><polygon points="810.41,73.34 785.49,73.17 771.61,73.69 789.49,73.82" fill="rgb(76,78,79)" stroke="rgb(76,78,79)" stroke-width="0.5"/><polygon points="785.49,73.17 759.32,73.06 752.68,73.62 771.61,73.69" fill="rgb(82,84,85)" stroke="rgb(82,84,85)" stroke-width="0.5"/><polygon points="759.32,73.06 732.57,73.03 733.26,73.59 752.68,73.62" fill="rgb(87,89,90)" stroke="rgb(87,89,90)" stroke-width="0.5"/><polygon points="732.57,73.03 705.91,73.06 713.90,73.62 733.26,73.59" fill="rgb(87,89,90)" stroke="rgb(87,89,90)" stroke-width="0.5"/><polygon points="705.91,73.06 679.99,73.17 695.16,73.69 713.90,73.62" fill="rgb(82,84,85)" stroke="rgb(82,84,85)" stroke-width="0.5"/><polygon points="679.99,73.17 655.49,73.34 677.58,73.82 695.16,73.69" fill="rgb(76,78,79)" stroke="rgb(76,78,79)" stroke-width="0.5"/><polygon points="655.49,73.34 633.10,73.58 661.73,74.00 677.58,73.82" fill="rgb(70,72,73)" stroke="rgb(70,72,73)" stroke-width="0.5"/><polygon points="633.10,73.58 613.56,73.88 648.15,74.22 661.73,74.00" fill="rgb(65,67,68)" stroke="rgb(65,67,68)" stroke-width="0.5"/><polygon points="613.56,73.88 597.62,74.23 637.38,74.48 648.15,74.22" fill="rgb(60,62,63)" stroke="rgb(60,62,63)" stroke-width="0.5"/><polygon points="597.62,74.23 586.05,74.64 629.92,74.77 637.38,74.48" fill="rgb(60,62,63)" stroke="rgb(60,62,63)" stroke-width="0.5"/><polygon points="586.05,74.64 579.59,75.09 626.23,75.09 629.92,74.77" fill="rgb(60,62,63)" stroke="rgb(60,62,63)" stroke-width="0.5"/><polygon points="579.59,75.09 578.91,75.56 626.66,75.41 626.23,75.09" fill="rgb(67,69,70)" stroke="rgb(67,69,70)" stroke-width="0.5"/><polygon points="578.91,75.56 584.54,76.03 631.43,75.74 626.66,75.41" fill="rgb(80,82,83)" stroke="rgb(80,82,83)" stroke-width="0.5"/><polygon points="584.54,76.03 596.73,76.50 640.59,76.05 631.43,75.74" fill="rgb(93,95,96)" stroke="rgb(93,95,96)" stroke-width="0.5"/><polygon points="596.73,76.50 615.42,76.92 653.95,76.33 640.59,76.05" fill="rgb(99,101,102)" stroke="rgb(99,101,102)" stroke-width="0.5"/><polygon points="615.42,76.92 640.12,77.29 671.10,76.57 653.95,76.33" fill="rgb(104,106,107)" stroke="rgb(104,106,107)" stroke-width="0.5"/><polygon points="640.12,77.29 669.85,77.57 691.33,76.75 671.10,76.57" fill="rgb(108,110,111)" stroke="rgb(108,110,111)" stroke-width="0.5"/><polygon points="669.85,77.57 703.19,77.75 713.75,76.86 691.33,76.75" fill="rgb(113,115,116)" stroke="rgb(113,115,116)" stroke-width="0.5"/><polygon points="703.19,77.75 738.35,77.81 737.26,76.90 713.75,76.86" fill="rgb(118,120,121)" stroke="rgb(118,120,121)" stroke-width="0.5"/><path d="M738.35 77.81L737.26 76.90M737.26 76.90L760.68 76.86M738.35 77.81L773.38 77.75M773.38 77.75L760.68 76.86M760.68 76.86L782.82 76.75M773.38 77.75L806.29 77.57M806.29 77.57L782.82 76.75M782.82 76.75L802.62 76.57M806.29 77.57L835.34 77.29M835.34 77.29L802.62 76.57M802.62 76.57L819.19 76.33M835.34 77.29L859.15 76.92M859.15 76.92L819.19 76.33M819.19 76.33L831.87 76.05M859.15 76.92L876.81 76.50M876.81 76.50L831.87 76.05M831.87 76.05L840.27 75.74M876.81 76.50L887.89 76.03M887.89 76.03L840.27 75.74M840.27 75.74L844.26 75.41M887.89 76.03L892.35 75.56M892.35 75.56L844.26 75.41M844.26 75.41L843.90 75.09M892.35 75.56L890.54 75.09M890.54 75.09L843.90 75.09M843.90 75.09L839.45 74.77M890.54 75.09L883.00 74.64M883.00 74.64L839.45 74.77M839.45 74.77L831.29 74.48M883.00 74.64L870.45 74.23M870.45 74.23L831.29 74.48M831.29 74.48L819.89 74.22M870.45 74.23L853.64 73.88M853.64 73.88L819.89 74.22M819.89 74.22L805.77 74.00M853.64 73.88L833.38 73.58M833.38 73.58L805.77 74.00M805.77 74.00L789.49 73.82M833.38 73.58L810.41 73.34M810.41 73.34L789.49 73.82M789.49 73.82L771.61 73.69M810.41 73.34L785.49 73.17M785.49 73.17L771.61 73.69M771.61 73.69L752.68 73.62M785.49 73.17L759.32 73.06M759.32 73.06L752.68 73.62M752.68 73.62L733.26 73.59M759.32 73.06L732.57 73.03M732.57 73.03L733.26 73.59M733.26 73.59L713.90 73.62M732.57 73.03L705.91 73.06M705.91 73.06L713.90 73.62M713.90 73.62L695.16 73.69M705.91 73.06L679.99 73.17M679.99 73.17L695.16 73.69M695.16 73.69L677.58 73.82M679.99 73.17L655.49 73.34M655.49 73.34L677.58 73.82M677.58 73.82L661.73 74.00M655.49 73.34L633.10 73.58M633.10 73.58L661.73 74.00M661.73 74.00L648.15 74.22M633.10 73.58L613.56 73.88M613.56 73.88L648.15 74.22M648.15 74.22L637.38 74.48M613.56 73.88L597.62 74.23M597.62 74.23L637.38 74.48M637.38 74.48L629.92 74.77M597.62 74.23L586.05 74.64M586.05 74.64L629.92 74.77M629.92 74.77L626.23 75.09M586.05 74.64L579.59 75.09M579.59 75.09L626.23 75.09M626.23 75.09L626.66 75.41M579.59 75.09L578.91 75.56M578.91 75.56L626.66 75.41M626.66 75.41L631.43 75.74M578.91 75.56L584.54 76.03M584.54 76.03L631.43 75.74M631.43 75.74L640.59 76.05M584.54 76.03L596.73 76.50M596.73 76.50L640.59 76.05M640.59 76.05L653.95 76.33M596.73 76.50L615.42 76.92M615.42 76.92L653.95 76.33M653.95 76.33L671.10 76.57M615.42 76.92L640.12 77.29M640.12 77.29L671.10 76.57M671.10 76.57L691.33 76.75M640.12 77.29L669.85 77.57M669.85 77.57L691.33 76.75M691.33 76.75L713.75 76.86M669.85 77.57L703.19 77.75M703.19 77.75L713.75 76.86M713.75 76.86L737.26 76.90M703.19 77.75L738.35 77.81" stroke="#151515" stroke-opacity="0.8" stroke-width="1" fill="none"/><polygon points="738.35,77.81 773.38,77.75 773.14,116.18 738.26,116.35" fill="rgb(161,163,164)" stroke="rgb(161,163,164)" stroke-width="0.5"/><polygon points="738.26,116.35 773.14,116.18 772.87,160.29 738.15,160.61" fill="rgb(161,163,164)" stroke="rgb(161,163,164)" stroke-width="0.5"/><polygon points="738.15,160.61 772.87,160.29 771.70,349.42 737.67,350.29" fill="rgb(161,163,164)" stroke="rgb(161,163,164)" stroke-width="0.5"/><polygon points="737.67,350.29 771.70,349.42 771.45,390.01 737.57,391.00" fill="rgb(161,163,164)" stroke="rgb(161,163,164)" stroke-width="0.5"/><polygon points="737.57,391.00 771.45,390.01 771.23,425.46 737.48,426.55" fill="rgb(161,163,164)" stroke="rgb(161,163,164)" stroke-width="0.5"/><polygon points="773.38,77.75 806.29,77.57 805.92,115.65 773.14,116.18" fill="rgb(149,151,152)" stroke="rgb(149,151,152)" stroke-width="0.5"/><polygon points="773.14,116.18 805.92,115.65 805.50,159.38 772.87,160.29" fill="rgb(149,151,152)" stroke="rgb(149,151,152)" stroke-width="0.5"/><polygon points="772.87,160.29 805.50,159.38 803.69,346.86 771.70,349.42" fill="rgb(149,151,152)" stroke="rgb(149,151,152)" stroke-width="0.5"/><polygon points="771.70,349.42 803.69,346.86 803.30,387.11 771.45,390.01" fill="rgb(149,151,152)" stroke="rgb(149,151,152)" stroke-width="0.5"/><polygon points="771.45,390.01 803.30,387.11 802.96,422.26 771.23,425.46" fill="rgb(149,151,152)" stroke="rgb(149,151,152)" stroke-width="0.5"/><polygon points="806.29,77.57 835.34,77.29 834.86,114.83 805.92,115.65" fill="rgb(128,130,131)" stroke="rgb(128,130,131)" stroke-width="0.5"/><polygon points="805.92,115.65 834.86,114.83 834.32,157.93 805.50,159.38" fill="rgb(128,130,131)" stroke="rgb(128,130,131)" stroke-width="0.5"/><polygon points="805.50,159.38 834.32,157.93 831.97,342.80 803.69,346.86" fill="rgb(128,130,131)" stroke="rgb(128,130,131)" stroke-width="0.5"/><polygon points="803.69,346.86 831.97,342.80 831.46,382.51 803.30,387.11" fill="rgb(128,130,131)" stroke="rgb(128,130,131)" stroke-width="0.5"/><polygon points="803.30,387.11 831.46,382.51 831.02,417.19 802.96,422.26" fill="rgb(128,130,131)" stroke="rgb(128,130,131)" stroke-width="0.5"/><polygon points="835.34,77.29 859.15,76.92 858.59,113.75 834.86,114.83" fill="rgb(107,109,110)" stroke="rgb(107,109,110)" stroke-width="0.5"/><polygon points="834.86,114.83 858.59,113.75 857.95,156.04 834.32,157.93" fill="rgb(107,109,110)" stroke="rgb(107,109,110)" stroke-width="0.5"/><polygon points="834.32,157.93 857.95,156.04 855.19,337.52 831.97,342.80" fill="rgb(107,109,110)" stroke="rgb(107,109,110)" stroke-width="0.5"/><polygon points="831.97,342.80 855.19,337.52 854.60,376.51 831.46,382.51" fill="rgb(107,109,110)" stroke="rgb(107,109,110)" stroke-width="0.5"/><polygon points="831.46,382.51 854.60,376.51 854.08,410.58 831.02,417.19" fill="rgb(107,109,110)" stroke="rgb(107,109,110)" stroke-width="0.5"/><polygon points="859.15,76.92 876.81,76.50 876.20,112.49 858.59,113.75" fill="rgb(87,89,90)" stroke="rgb(87,89,90)" stroke-width="0.5"/><polygon points="858.59,113.75 876.20,112.49 875.49,153.84 857.95,156.04" fill="rgb(87,89,90)" stroke="rgb(87,89,90)" stroke-width="0.5"/><polygon points="857.95,156.04 875.49,153.84 872.46,331.34 855.19,337.52" fill="rgb(87,89,90)" stroke="rgb(87,89,90)" stroke-width="0.5"/><polygon points="855.19,337.52 872.46,331.34 871.81,369.50 854.60,376.51" fill="rgb(87,89,90)" stroke="rgb(87,89,90)" stroke-width="0.5"/><polygon points="854.60,376.51 871.81,369.50 871.24,402.84 854.08,410.58" fill="rgb(87,89,90)" stroke="rgb(87,89,90)" stroke-width="0.5"/><polygon points="876.81,76.50 887.89,76.03 887.25,111.12 876.20,112.49" fill="rgb(72,74,75)" stroke="rgb(72,74,75)" stroke-width="0.5"/><polygon points="876.20,112.49 887.25,111.12 886.51,151.44 875.49,153.84" fill="rgb(72,74,75)" stroke="rgb(72,74,75)" stroke-width="0.5"/><polygon points="875.49,153.84 886.51,151.44 883.35,324.62 872.46,331.34" fill="rgb(72,74,75)" stroke="rgb(72,74,75)" stroke-width="0.5"/><polygon points="872.46,331.34 883.35,324.62 882.67,361.87 871.81,369.50" fill="rgb(72,74,75)" stroke="rgb(72,74,75)" stroke-width="0.5"/><polygon points="871.81,369.50 882.67,361.87 882.08,394.43 871.24,402.84" fill="rgb(72,74,75)" stroke="rgb(72,74,75)" stroke-width="0.5"/><polygon points="887.89,76.03 892.35,75.56 891.71,109.71 887.25,111.12" fill="rgb(62,64,65)" stroke="rgb(62,64,65)" stroke-width="0.5"/><polygon points="887.25,111.12 891.71,109.71 890.98,148.97 886.51,151.44" fill="rgb(62,64,65)" stroke="rgb(62,64,65)" stroke-width="0.5"/><polygon points="886.51,151.44 890.98,148.97 887.82,317.69 883.35,324.62" fill="rgb(62,64,65)" stroke="rgb(62,64,65)" stroke-width="0.5"/><polygon points="883.35,324.62 887.82,317.69 887.15,354.00 882.67,361.87" fill="rgb(62,64,65)" stroke="rgb(62,64,65)" stroke-width="0.5"/><polygon points="882.67,361.87 887.15,354.00 886.55,385.75 882.08,394.43" fill="rgb(62,64,65)" stroke="rgb(62,64,65)" stroke-width="0.5"/><polygon points="578.91,75.56 584.54,76.03 585.02,111.12 579.40,109.71" fill="rgb(146,148,149)" stroke="rgb(146,148,149)" stroke-width="0.5"/><polygon points="579.40,109.71 585.02,111.12 585.57,151.44 579.96,148.97" fill="rgb(146,148,149)" stroke="rgb(146,148,149)" stroke-width="0.5"/><polygon points="579.96,148.97 585.57,151.44 587.94,324.62 582.37,317.69" fill="rgb(146,148,149)" stroke="rgb(146,148,149)" stroke-width="0.5"/><polygon points="582.37,317.69 587.94,324.62 588.45,361.87 582.89,354.00" fill="rgb(146,148,149)" stroke="rgb(146,148,149)" stroke-width="0.5"/><polygon points="582.89,354.00 588.45,361.87 588.89,394.43 583.34,385.75" fill="rgb(146,148,149)" stroke="rgb(146,148,149)" stroke-width="0.5"/><polygon points="584.54,76.03 596.73,76.50 597.17,112.49 585.02,111.12" fill="rgb(150,152,153)" stroke="rgb(150,152,153)" stroke-width="0.5"/><polygon points="585.02,111.12 597.17,112.49 597.69,153.84 585.57,151.44" fill="rgb(150,152,153)" stroke="rgb(150,152,153)" stroke-width="0.5"/><polygon points="585.57,151.44 597.69,153.84 599.89,331.34 587.94,324.62" fill="rgb(150,152,153)" stroke="rgb(150,152,153)" stroke-width="0.5"/><polygon points="587.94,324.62 599.89,331.34 600.36,369.50 588.45,361.87" fill="rgb(150,152,153)" stroke="rgb(150,152,153)" stroke-width="0.5"/><polygon points="588.45,361.87 600.36,369.50 600.77,402.84 588.89,394.43" fill="rgb(150,152,153)" stroke="rgb(150,152,153)" stroke-width="0.5"/><polygon points="596.73,76.50 615.42,76.92 615.81,113.75 597.17,112.49" fill="rgb(154,156,157)" stroke="rgb(154,156,157)" stroke-width="0.5"/><polygon points="597.17,112.49 615.81,113.75 616.25,156.04 597.69,153.84" fill="rgb(154,156,157)" stroke="rgb(154,156,157)" stroke-width="0.5"/><polygon points="597.69,153.84 616.25,156.04 618.14,337.52 599.89,331.34" fill="rgb(154,156,157)" stroke="rgb(154,156,157)" stroke-width="0.5"/><polygon points="599.89,331.34 618.14,337.52 618.55,376.51 600.36,369.50" fill="rgb(154,156,157)" stroke="rgb(154,156,157)" stroke-width="0.5"/><polygon points="600.36,369.50 618.55,376.51 618.90,410.58 600.77,402.84" fill="rgb(154,156,157)" stroke="rgb(154,156,157)" stroke-width="0.5"/><polygon points="615.42,76.92 640.12,77.29 640.41,114.83 615.81,113.75" fill="rgb(158,160,161)" stroke="rgb(158,160,161)" stroke-width="0.5"/><polygon points="615.81,113.75 640.41,114.83 640.75,157.93 616.25,156.04" fill="rgb(158,160,161)" stroke="rgb(158,160,161)" stroke-width="0.5"/><polygon points="616.25,156.04 640.75,157.93 642.20,342.80 618.14,337.52" fill="rgb(158,160,161)" stroke="rgb(158,160,161)" stroke-width="0.5"/><polygon points="618.14,337.52 642.20,342.80 642.51,382.51 618.55,376.51" fill="rgb(158,160,161)" stroke="rgb(158,160,161)" stroke-width="0.5"/><polygon points="618.55,376.51 642.51,382.51 642.78,417.19 618.90,410.58" fill="rgb(158,160,161)" stroke="rgb(158,160,161)" stroke-width="0.5"/><polygon points="640.12,77.29 669.85,77.57 670.02,115.65 640.41,114.83" fill="rgb(161,163,164)" stroke="rgb(161,163,164)" stroke-width="0.5"/><polygon points="640.41,114.83 670.02,115.65 670.23,159.38 640.75,157.93" fill="rgb(161,163,164)" stroke="rgb(161,163,164)" stroke-width="0.5"/><polygon points="640.75,157.93 670.23,159.38 671.11,346.86 642.20,342.80" fill="rgb(161,163,164)" stroke="rgb(161,163,164)" stroke-width="0.5"/><polygon points="642.20,342.80 671.11,346.86 671.30,387.11 642.51,382.51" fill="rgb(161,163,164)" stroke="rgb(161,163,164)" stroke-width="0.5"/><polygon points="642.51,382.51 671.30,387.11 671.47,422.26 642.78,417.19" fill="rgb(161,163,164)" stroke="rgb(161,163,164)" stroke-width="0.5"/><polygon points="669.85,77.57 703.19,77.75 703.23,116.18 670.02,115.65" fill="rgb(163,165,166)" stroke="rgb(163,165,166)" stroke-width="0.5"/><polygon points="670.02,115.65 703.23,116.18 703.28,160.29 670.23,159.38" fill="rgb(163,165,166)" stroke="rgb(163,165,166)" stroke-width="0.5"/><polygon points="670.23,159.38 703.28,160.29 703.51,349.42 671.11,346.86" fill="rgb(163,165,166)" stroke="rgb(163,165,166)" stroke-width="0.5"/><polygon points="671.11,346.86 703.51,349.42 703.56,390.01 671.30,387.11" fill="rgb(163,165,166)" stroke="rgb(163,165,166)" stroke-width="0.5"/><polygon points="671.30,387.11 703.56,390.01 703.60,425.46 671.47,422.26" fill="rgb(163,165,166)" stroke="rgb(163,165,166)" stroke-width="0.5"/><polygon points="703.19,77.75 738.35,77.81 738.26,116.35 703.23,116.18" fill="rgb(164,166,167)" stroke="rgb(164,166,167)" stroke-width="0.5"/><polygon points="703.23,116.18 738.26,116.35 738.15,160.61 703.28,160.29" fill="rgb(164,166,167)" stroke="rgb(164,166,167)" stroke-width="0.5"/><polygon points="703.28,160.29 738.15,160.61 737.67,350.29 703.51,349.42" fill="rgb(164,166,167)" stroke="rgb(164,166,167)" stroke-width="0.5"/><polygon points="703.51,349.42 737.67,350.29 737.57,391.00 703.56,390.01" fill="rgb(164,166,167)" stroke="rgb(164,166,167)" stroke-width="0.5"/><polygon points="703.56,390.01 737.57,391.00 737.48,426.55 703.60,425.46" fill="rgb(164,166,167)" stroke="rgb(164,166,167)" stroke-width="0.5"/><path d="M738.35 77.81L773.38 77.75M738.26 116.35L773.14 116.18M738.15 160.61L772.87 160.29M737.67 350.29L771.70 349.42M737.57 391.00L771.45 390.01M737.48 426.55L771.23 425.46M773.38 77.75L806.29 77.57M773.14 116.18L805.92 115.65M772.87 160.29L805.50 159.38M771.70 349.42L803.69 346.86M771.45 390.01L803.30 387.11M771.23 425.46L802.96 422.26M806.29 77.57L835.34 77.29M805.92 115.65L834.86 114.83M805.50 159.38L834.32 157.93M803.69 346.86L831.97 342.80M803.30 387.11L831.46 382.51M802.96 422.26L831.02 417.19M835.34 77.29L859.15 76.92M834.86 114.83L858.59 113.75M834.32 157.93L857.95 156.04M831.97 342.80L855.19 337.52M831.46 382.51L854.60 376.51M831.02 417.19L854.08 410.58M859.15 76.92L876.81 76.50M858.59 113.75L876.20 112.49M857.95 156.04L875.49 153.84M855.19 337.52L872.46 331.34M854.60 376.51L871.81 369.50M854.08 410.58L871.24 402.84M876.81 76.50L887.89 76.03M876.20 112.49L887.25 111.12M875.49 153.84L886.51 151.44M872.46 331.34L883.35 324.62M871.81 369.50L882.67 361.87M871.24 402.84L882.08 394.43M887.89 76.03L892.35 75.56M887.25 111.12L891.71 109.71M886.51 151.44L890.98 148.97M883.35 324.62L887.82 317.69M882.67 361.87L887.15 354.00M882.08 394.43L886.55 385.75M578.91 75.56L584.54 76.03M579.40 109.71L585.02 111.12M579.96 148.97L585.57 151.44M582.37 317.69L587.94 324.62M582.89 354.00L588.45 361.87M583.34 385.75L588.89 394.43M584.54 76.03L596.73 76.50M585.02 111.12L597.17 112.49M585.57 151.44L597.69 153.84M587.94 324.62L599.89 331.34M588.45 361.87L600.36 369.50M588.89 394.43L600.77 402.84M596.73 76.50L615.42 76.92M597.17 112.49L615.81 113.75M597.69 153.84L616.25 156.04M599.89 331.34L618.14 337.52M600.36 369.50L618.55 376.51M600.77 402.84L618.90 410.58M615.42 76.92L640.12 77.29M615.81 113.75L640.41 114.83M616.25 156.04L640.75 157.93M618.14 337.52L642.20 342.80M618.55 376.51L642.51 382.51M618.90 410.58L642.78 417.19M640.12 77.29L669.85 77.57M640.41 114.83L670.02 115.65M640.75 157.93L670.23 159.38M642.20 342.80L671.11 346.86M642.51 382.51L671.30 387.11M642.78 417.19L671.47 422.26M669.85 77.57L703.19 77.75M670.02 115.65L703.23 116.18M670.23 159.38L703.28 160.29M671.11 346.86L703.51 349.42M671.30 387.11L703.56 390.01M671.47 422.26L703.60 425.46M703.19 77.75L738.35 77.81M703.23 116.18L738.26 116.35M703.28 160.29L738.15 160.61M703.51 349.42L737.67 350.29M703.56 390.01L737.57 391.00M703.60 425.46L737.48 426.55M738.35 77.81L737.48 426.55M773.38 77.75L771.23 425.46M806.29 77.57L802.96 422.26M835.34 77.29L831.02 417.19M859.15 76.92L854.08 410.58M876.81 76.50L871.24 402.84M887.89 76.03L882.08 394.43M892.35 75.56L886.55 385.75M578.91 75.56L583.34 385.75M584.54 76.03L588.89 394.43M596.73 76.50L600.77 402.84M615.42 76.92L618.90 410.58M640.12 77.29L642.78 417.19M669.85 77.57L671.47 422.26M703.19 77.75L703.60 425.46" stroke="#151515" stroke-opacity="0.75" stroke-width="1" fill="none"/><polygon points="806,116.3 867.9,117.6 838.8,118.8 822.2,161.9 805.6,159.2" fill="#939596"/><polygon points="804,346.4 854.1,332.2 822.3,354 835.1,401.7 804,387.2" fill="#9a9c9d"/><polygon points="804,346.4 854.1,332.2 822.3,354" fill="#6f7173"/><polygon points="806,115.8 867.9,116.8 838.8,118.8" fill="#4a4b4c"/><path d="M806 116.3L838.8 118.8M805.6 159.2L822.2 161.9M804 346.4L822.3 354M804 387.2L835.1 401.7M805.8 116V159.5M804 346V387.5M804 346.4L854.1 332.2" stroke="#151515" stroke-opacity="0.8" stroke-width="1" fill="none"/><polygon points="822.20,161.90 839.10,118.50 875.90,170.40 853.40,205.80" fill="#a99683"/><polygon points="839.10,118.50 867.90,117.60 906.10,167.90 875.90,170.40" fill="#a99683"/><polygon points="853.40,205.80 875.90,170.40 901.40,227.20 871.30,246.90" fill="#a89582"/><polygon points="875.90,170.40 906.10,167.90 932.50,224.10 901.40,227.20" fill="#a89582"/><polygon points="871.30,246.90 901.40,227.20 911.20,287.20 876.40,279.20" fill="#a7947f"/><polygon points="901.40,227.20 932.50,224.10 941.80,283.80 911.20,287.20" fill="#a5927e"/><polygon points="876.40,279.20 911.20,287.20 900.30,341.20 871.40,306.30" fill="#a7937f"/><polygon points="911.20,287.20 941.80,283.80 930.20,337.10 900.30,341.20" fill="#937c5f"/><polygon points="871.40,306.30 900.30,341.20 873.50,379.00 854.10,332.20" fill="#a7937f"/><polygon points="900.30,341.20 930.20,337.10 901.70,374.40 873.50,379.00" fill="#86693b"/><polygon points="854.10,332.20 873.50,379.00 835.30,401.60 822.90,353.60" fill="#a7937f"/><polygon points="873.50,379.00 901.70,374.40 862.00,397.00 835.30,401.60" fill="#84653a"/><path d="M822.2 161.9 L853.4 205.8 L871.3 246.9 L876.4 279.2 L871.4 306.3 L854.1 332.2 L822.9 353.6 M839.1 118.5 L875.9 170.4 L901.4 227.2 L911.2 287.2 L900.3 341.2 L873.5 379.0 L835.3 401.6 M867.9 117.6 L906.1 167.9 L932.5 224.1 L941.8 283.8 L930.2 337.1 L901.7 374.4 L862.0 397.0 M822.2 161.9 L839.1 118.5 L867.9 117.6 M853.4 205.8 L875.9 170.4 L906.1 167.9 M871.3 246.9 L901.4 227.2 L932.5 224.1 M876.4 279.2 L911.2 287.2 L941.8 283.8 M871.4 306.3 L900.3 341.2 L930.2 337.1 M854.1 332.2 L873.5 379.0 L901.7 374.4 M822.9 353.6 L835.3 401.6 L862.0 397.0" stroke="#ff9f2a" stroke-width="1.2" fill="none" stroke-linejoin="round"/><defs><clipPath id="mugclip"><polygon points="582.87,381.43 578.49,75.32 578.85,75.20 579.59,75.09 580.69,74.97 582.13,74.86 583.93,74.75 586.05,74.64 588.49,74.53 591.24,74.43 594.29,74.33 597.62,74.23 601.23,74.14 605.09,74.05 609.21,73.96 613.56,73.88 618.14,73.80 622.93,73.72 627.92,73.65 633.10,73.58 638.46,73.51 643.99,73.45 649.67,73.39 655.49,73.34 661.44,73.29 667.52,73.24 673.71,73.20 679.99,73.17 686.36,73.13 692.82,73.11 699.33,73.08 705.91,73.06 712.53,73.05 719.19,73.04 725.88,73.03 732.57,73.03 739.28,73.03 745.98,73.04 752.66,73.05 759.32,73.06 765.95,73.08 772.52,73.11 779.04,73.13 785.49,73.17 791.87,73.20 798.15,73.24 804.34,73.29 810.41,73.34 816.37,73.39 822.18,73.45 827.86,73.51 833.38,73.58 838.73,73.65 843.89,73.72 848.87,73.80 853.64,73.88 858.20,73.96 862.53,74.05 866.62,74.14 870.45,74.23 874.02,74.33 877.31,74.43 880.31,74.53 883.00,74.64 885.39,74.75 887.45,74.86 889.17,74.97 890.54,75.09 891.56,75.20 892.20,75.32 892.47,75.44 886.70,383.58 886.55,385.75 886.02,387.92 885.10,390.09 883.79,392.27 882.08,394.43 879.97,396.57 877.46,398.69 874.55,400.79 871.24,402.84 867.54,404.86 863.43,406.82 858.95,408.73 854.08,410.58 848.84,412.35 843.24,414.05 837.30,415.66 831.02,417.19 824.43,418.62 817.54,419.94 810.38,421.16 802.96,422.26 795.31,423.25 787.46,424.11 779.42,424.85 771.23,425.46 762.91,425.94 754.49,426.28 746.01,426.48 737.48,426.55 728.95,426.48 720.44,426.28 711.98,425.94 703.60,425.46 695.33,424.85 687.20,424.11 679.24,423.25 671.47,422.26 663.91,421.16 656.60,419.94 649.55,418.62 642.78,417.19 636.31,415.66 630.17,414.05 624.36,412.35 618.90,410.58 613.80,408.73 609.08,406.82 604.73,404.86 600.77,402.84 597.21,400.79 594.04,398.69 591.27,396.57 588.89,394.43 586.91,392.27 585.33,390.09 584.14,387.92 583.34,385.75 582.92,383.58"/><polygon points="839.10,118.50 867.90,117.60 906.10,167.90 932.50,224.10 941.80,283.80 930.20,337.10 901.70,374.40 862.00,397.00 835.30,401.60 822.90,353.60 854.10,332.20 871.40,306.30 876.40,279.20 871.30,246.90 853.40,205.80 822.20,161.90"/></clipPath></defs><path clip-path="url(#mugclip)" d="M560.9 258.0L569.7 258.0M569.7 258.0L578.6 258.0M578.6 258.0L587.4 258.0M587.4 258.0L596.3 258.0M596.3 258.0L605.1 258.0M605.1 258.0L614.0 258.0M614.0 258.0L622.8 258.0M622.8 258.0L631.7 258.0M631.7 258.0L640.5 258.0M640.5 258.0L649.4 258.0M649.4 258.0L658.2 258.0M658.2 258.0L667.1 258.0M667.1 258.0L675.9 258.0M675.9 258.0L684.8 258.0M684.8 258.0L693.6 258.0M693.6 258.0L702.5 258.0M702.5 258.0L711.3 258.0M711.3 258.0L720.2 258.0M720.2 258.0L729.1 258.0M729.1 258.0L737.9 258.0M737.9 258.0L746.8 258.0M746.8 258.0L755.6 258.0M755.6 258.0L764.5 258.0M764.5 258.0L773.3 258.0M773.3 258.0L782.2 258.0M782.2 258.0L791.0 258.0M791.0 258.0L799.9 258.0M799.9 258.0L808.7 258.0M808.7 258.0L817.6 258.0M817.6 258.0L826.4 258.0M826.4 258.0L835.3 258.0M835.3 258.0L844.1 258.0M844.1 258.0L853.0 258.0M853.0 258.0L861.8 258.0M861.8 258.0L870.7 258.0M490.1 295.4L500.6 295.4M500.6 295.4L511.1 295.4M511.1 295.4L521.6 295.4M521.6 295.4L532.1 295.4M532.1 295.4L542.6 295.4M542.6 295.4L553.1 295.4M553.1 295.4L563.6 295.4M563.6 295.4L574.1 295.4M574.1 295.4L584.7 295.4M584.7 295.4L595.2 295.4M595.2 295.4L605.7 295.4M605.7 295.4L616.2 295.4M616.2 295.4L626.7 295.4M626.7 295.4L637.2 295.4M637.2 295.4L647.7 295.4M647.7 295.4L658.2 295.4M658.2 295.4L668.7 295.4M668.7 295.4L679.2 295.4M679.2 295.4L689.7 295.4M689.7 295.4L700.2 295.4M700.2 295.4L710.7 295.4M710.7 295.4L721.3 295.4M721.3 295.4L731.8 295.4M731.8 295.4L742.3 295.4M742.3 295.4L752.8 295.4M752.8 295.4L763.3 295.4M763.3 295.4L773.8 295.4M773.8 295.4L784.3 295.4M784.3 295.4L794.8 295.4M794.8 295.4L805.3 295.4M805.3 295.4L815.8 295.4M815.8 295.4L826.3 295.4M826.3 295.4L836.8 295.4M836.8 295.4L847.3 295.4M847.3 295.4L857.9 295.4M857.9 295.4L868.4 295.4M868.4 295.4L878.9 295.4M878.9 295.4L889.4 295.4M889.4 295.4L899.9 295.4M899.9 295.4L910.4 295.4M910.4 295.4L920.9 295.4M920.9 295.4L931.4 295.4M931.4 295.4L941.9 295.4M941.9 295.4L952.4 295.4M952.4 295.4L962.9 295.4M962.9 295.4L973.4 295.4M973.4 295.4L983.9 295.4M983.9 295.4L994.5 295.4M994.5 295.4L1005.0 295.4M1005.0 295.4L1015.5 295.4M1015.5 295.4L1026.0 295.4M1026.0 295.4L1036.5 295.4M1036.5 295.4L1047.0 295.4M1047.0 295.4L1057.5 295.4M1057.5 295.4L1068.0 295.4M1068.0 295.4L1078.5 295.4M1078.5 295.4L1089.0 295.4M1089.0 295.4L1099.5 295.4M1099.5 295.4L1110.0 295.4M1110.0 295.4L1120.5 295.4M1120.5 295.4L1131.1 295.4M1131.1 295.4L1141.6 295.4M1141.6 295.4L1152.1 295.4M1152.1 295.4L1162.6 295.4M438.4 350.0L451.3 350.0M451.3 350.0L464.3 350.0M464.3 350.0L477.2 350.0M477.2 350.0L490.1 350.0M490.1 350.0L503.0 350.0M503.0 350.0L516.0 350.0M516.0 350.0L528.9 350.0M528.9 350.0L541.8 350.0M541.8 350.0L554.7 350.0M554.7 350.0L567.7 350.0M567.7 350.0L580.6 350.0M580.6 350.0L593.5 350.0M593.5 350.0L606.4 350.0M606.4 350.0L619.4 350.0M619.4 350.0L632.3 350.0M632.3 350.0L645.2 350.0M645.2 350.0L658.2 350.0M658.2 350.0L671.1 350.0M671.1 350.0L684.0 350.0M684.0 350.0L696.9 350.0M696.9 350.0L709.9 350.0M709.9 350.0L722.8 350.0M722.8 350.0L735.7 350.0M735.7 350.0L748.6 350.0M748.6 350.0L761.6 350.0M761.6 350.0L774.5 350.0M774.5 350.0L787.4 350.0M787.4 350.0L800.3 350.0M800.3 350.0L813.3 350.0M813.3 350.0L826.2 350.0M826.2 350.0L839.1 350.0M839.1 350.0L852.0 350.0M852.0 350.0L865.0 350.0M865.0 350.0L877.9 350.0M877.9 350.0L890.8 350.0M890.8 350.0L903.8 350.0M903.8 350.0L916.7 350.0M916.7 350.0L929.6 350.0M929.6 350.0L942.5 350.0M942.5 350.0L955.5 350.0M955.5 350.0L968.4 350.0M968.4 350.0L981.3 350.0M981.3 350.0L994.2 350.0M994.2 350.0L1007.2 350.0M1007.2 350.0L1020.1 350.0M1020.1 350.0L1033.0 350.0M1033.0 350.0L1045.9 350.0M1045.9 350.0L1058.9 350.0M1058.9 350.0L1071.8 350.0M1071.8 350.0L1084.7 350.0M1084.7 350.0L1097.6 350.0M1097.6 350.0L1110.6 350.0M1110.6 350.0L1123.5 350.0M1123.5 350.0L1136.4 350.0M1136.4 350.0L1149.4 350.0M1149.4 350.0L1162.3 350.0M1162.3 350.0L1175.2 350.0M1175.2 350.0L1188.1 350.0M1188.1 350.0L1201.1 350.0M1201.1 350.0L1214.0 350.0M1214.0 350.0L1226.9 350.0M1226.9 350.0L1239.8 350.0M1239.8 350.0L1252.8 350.0M1252.8 350.0L1265.7 350.0M355.8 437.2L372.6 437.2M372.6 437.2L389.4 437.2M389.4 437.2L406.2 437.2M406.2 437.2L423.0 437.2M423.0 437.2L439.8 437.2M439.8 437.2L456.6 437.2M456.6 437.2L473.4 437.2M473.4 437.2L490.2 437.2M490.2 437.2L507.0 437.2M507.0 437.2L523.7 437.2M523.7 437.2L540.5 437.2M540.5 437.2L557.3 437.2M557.3 437.2L574.1 437.2M574.1 437.2L590.9 437.2M590.9 437.2L607.7 437.2M607.7 437.2L624.5 437.2M624.5 437.2L641.3 437.2M641.3 437.2L658.1 437.2M658.1 437.2L674.9 437.2M674.9 437.2L691.7 437.2M691.7 437.2L708.4 437.2M708.4 437.2L725.2 437.2M725.2 437.2L742.0 437.2M742.0 437.2L758.8 437.2M758.8 437.2L775.6 437.2M775.6 437.2L792.4 437.2M792.4 437.2L809.2 437.2M809.2 437.2L826.0 437.2M826.0 437.2L842.8 437.2M842.8 437.2L859.6 437.2M859.6 437.2L876.4 437.2M876.4 437.2L893.1 437.2M893.1 437.2L909.9 437.2M909.9 437.2L926.7 437.2M926.7 437.2L943.5 437.2M943.5 437.2L960.3 437.2M960.3 437.2L977.1 437.2M977.1 437.2L993.9 437.2M993.9 437.2L1010.7 437.2M1010.7 437.2L1027.5 437.2M1027.5 437.2L1044.3 437.2M1044.3 437.2L1061.1 437.2M1061.1 437.2L1077.8 437.2M1077.8 437.2L1094.6 437.2M1094.6 437.2L1111.4 437.2M1111.4 437.2L1128.2 437.2M1128.2 437.2L1145.0 437.2M1145.0 437.2L1161.8 437.2M1161.8 437.2L1178.6 437.2M1178.6 437.2L1195.4 437.2M1195.4 437.2L1212.2 437.2M1212.2 437.2L1229.0 437.2M1229.0 437.2L1245.8 437.2M1245.8 437.2L1262.5 437.2M1262.5 437.2L1279.3 437.2M1279.3 437.2L1296.1 437.2M1296.1 437.2L1312.9 437.2M1312.9 437.2L1329.7 437.2M1329.7 437.2L1346.5 437.2M1346.5 437.2L1363.3 437.2M1363.3 437.2L1380.1 437.2M1380.1 437.2L1396.9 437.2M1396.9 437.2L1413.7 437.2M1413.7 437.2L1430.5 437.2M202.8 598.9L226.8 598.9M226.8 598.9L250.7 598.9M250.7 598.9L274.7 598.9M274.7 598.9L298.6 598.9M298.6 598.9L322.6 598.9M322.6 598.9L346.5 598.9M346.5 598.9L370.5 598.9M370.5 598.9L394.5 598.9M394.5 598.9L418.4 598.9M418.4 598.9L442.4 598.9M442.4 598.9L466.3 598.9M466.3 598.9L490.3 598.9M490.3 598.9L514.2 598.9M514.2 598.9L538.2 598.9M538.2 598.9L562.1 598.9M562.1 598.9L586.1 598.9M586.1 598.9L610.0 598.9M610.0 598.9L634.0 598.9M634.0 598.9L657.9 598.9M657.9 598.9L681.9 598.9M681.9 598.9L705.8 598.9M705.8 598.9L729.8 598.9M729.8 598.9L753.7 598.9M753.7 598.9L777.7 598.9M777.7 598.9L801.6 598.9M801.6 598.9L825.6 598.9M825.6 598.9L849.5 598.9M849.5 598.9L873.5 598.9M873.5 598.9L897.4 598.9M897.4 598.9L921.4 598.9M921.4 598.9L945.3 598.9M945.3 598.9L969.3 598.9M969.3 598.9L993.3 598.9M993.3 598.9L1017.2 598.9M1017.2 598.9L1041.2 598.9M1041.2 598.9L1065.1 598.9M1065.1 598.9L1089.1 598.9M1089.1 598.9L1113.0 598.9M1113.0 598.9L1137.0 598.9M1137.0 598.9L1160.9 598.9M1160.9 598.9L1184.9 598.9M1184.9 598.9L1208.8 598.9M1208.8 598.9L1232.8 598.9M1232.8 598.9L1256.7 598.9M1256.7 598.9L1280.7 598.9M1280.7 598.9L1304.6 598.9M1304.6 598.9L1328.6 598.9M1328.6 598.9L1352.5 598.9M1352.5 598.9L1376.5 598.9M1376.5 598.9L1400.4 598.9M1400.4 598.9L1424.4 598.9M1424.4 598.9L1448.3 598.9M1448.3 598.9L1472.3 598.9M1472.3 598.9L1496.2 598.9M1496.2 598.9L1520.2 598.9M1520.2 598.9L1544.1 598.9M1544.1 598.9L1568.1 598.9M1568.1 598.9L1592.0 598.9M1592.0 598.9L1616.0 598.9M1616.0 598.9L1640.0 598.9M1640.0 598.9L1663.9 598.9M1663.9 598.9L1687.9 598.9M1687.9 598.9L1711.8 598.9M1711.8 598.9L1735.8 598.9M581.8 230.8L580.0 233.2M580.0 233.2L578.1 235.6M578.1 235.6L576.1 238.1M576.1 238.1L574.2 240.7M574.2 240.7L572.1 243.4M572.1 243.4L570.0 246.1M570.0 246.1L567.8 249.0M567.8 249.0L565.6 251.9M565.6 251.9L563.3 254.9M563.3 254.9L560.9 258.0M560.9 258.0L558.4 261.2M558.4 261.2L555.9 264.5M555.9 264.5L553.2 267.9M553.2 267.9L550.5 271.4M550.5 271.4L547.7 275.1M547.7 275.1L544.8 278.9M544.8 278.9L541.8 282.8M541.8 282.8L538.7 286.8M538.7 286.8L535.5 291.0M535.5 291.0L532.1 295.4M532.1 295.4L528.6 299.9M528.6 299.9L525.0 304.6M525.0 304.6L521.3 309.5M521.3 309.5L517.4 314.6M517.4 314.6L513.3 319.9M513.3 319.9L509.0 325.4M509.0 325.4L504.6 331.1M504.6 331.1L500.0 337.1M500.0 337.1L495.2 343.4M495.2 343.4L490.1 350.0M490.1 350.0L484.8 356.8M484.8 356.8L479.3 364.1M479.3 364.1L473.5 371.6M473.5 371.6L467.4 379.6M467.4 379.6L460.9 387.9M460.9 387.9L454.1 396.7M454.1 396.7L447.0 406.0M447.0 406.0L439.5 415.8M439.5 415.8L431.5 426.2M431.5 426.2L423.0 437.2M423.0 437.2L414.0 448.9M414.0 448.9L404.5 461.3M404.5 461.3L394.3 474.6M394.3 474.6L383.4 488.7M383.4 488.7L371.8 503.8M371.8 503.8L359.3 520.1M359.3 520.1L345.8 537.5M345.8 537.5L331.3 556.4M331.3 556.4L315.7 576.8M315.7 576.8L298.6 598.9" stroke="#2a2a2a" stroke-opacity="0.18" stroke-width="1.1" fill="none"/><line x1="738.30" y1="257.18" x2="774.90" y2="575" stroke="#ad5060" stroke-width="1.1"/><circle cx="735.2" cy="229.6" r="10" fill="none" stroke="#fff" stroke-width="1.6"/><circle cx="735.2" cy="229.6" r="10" fill="none" stroke="#e8303a" stroke-width="1.6" stroke-dasharray="3.6 4.25" stroke-dashoffset="1.8"/><path d="M715.2 229.6H730.2M740.2 229.6H755.2" stroke="#000" stroke-width="1.2"/><path d="M735.2 209.6V224.6M735.2 234.6V249.6" stroke="#666" stroke-width="1.2"/><circle cx="735.2" cy="229.6" r="2.6" fill="#f09a22" stroke="#333" stroke-width="0.8"/></svg></div>
<div id="panel">
  <svg style="position:absolute;left:7.3px;top:9.8px" width="10" height="8" viewBox="0 0 10 8"><path d="M0.8 1.2 L5 5.6 L9.2 1.2" stroke="#7a7a7a" stroke-width="1.1" fill="none"/></svg>
  <div class="t" style="left:22.3px;top:5.6px;font-size:11.7px;color:#c4c4c4">Bridge Edge Loops</div>

  <div class="lab" style="top:35.5px;letter-spacing:0.2px">Connect Loops</div>
  <div class="w dd" style="top:33.3px"><div class="wt" style="left:7px;top:2px">Open Loop</div>
    <svg class="chev" viewBox="0 0 10 8"><path d="M1.8 2.3 L4.9 5.4 L8 2.3" stroke="#dcdcdc" stroke-width="1.25" fill="none"/></svg></div>

  <div style="position:absolute;left:118.4px;top:58.3px;width:13.5px;height:13.7px;background:#555;border-radius:3px"></div>
  <div class="t" style="left:135.4px;top:57.8px;color:#b8b8b8;letter-spacing:0.2px">Merge</div>

  <div class="lab" style="top:79.5px">Merge Factor</div>
  <div class="w num" style="top:77.2px"><div class="wt" style="left:0;width:100%;text-align:center;top:2px">0.500</div></div>

  <div class="lab" style="top:101.5px;letter-spacing:0.35px">Twist</div>
  <div class="w num" style="top:99.2px"><div class="wt" style="left:0;width:100%;text-align:center;top:2px">0</div></div>

  <div class="lab" style="top:123.5px;letter-spacing:0.16px">Number of Cuts</div>
  <div class="w num" style="top:121.2px"><div class="wt" style="left:0;width:100%;text-align:center;top:2px">5</div></div>

  <div class="lab" style="top:145.5px;letter-spacing:0.45px">Interpolation</div>
  <div class="w dd" style="top:143.2px"><div class="wt" style="left:7px;top:2px">Blend Path</div>
    <svg class="chev" viewBox="0 0 10 8"><path d="M1.8 2.3 L4.9 5.4 L8 2.3" stroke="#dcdcdc" stroke-width="1.25" fill="none"/></svg></div>

  <div class="lab" style="top:167.5px;letter-spacing:0.25px">Smoothness</div>
  <div class="w" style="top:165.2px;background:#1f1f1f;border:1px solid #3a3a3a">
    <div style="position:absolute;left:8.2px;top:-0.4px;width:16.1px;height:18.4px;background:#4772b3"></div><div style="position:absolute;left:24.3px;top:-0.4px;width:2.1px;height:18.4px;background:#71a0e6"></div>
    <div class="wt" style="left:7px;top:2px;color:#e6e6e6">1.0</div></div>

  <div class="lab" style="top:189.5px">Profile Factor</div>
  <div class="w num" style="top:187.2px"><div class="wt" style="left:0;width:100%;text-align:center;top:2px">0.000</div></div>

  <div class="lab" style="top:211.5px;letter-spacing:0.02px">Profile Shape</div>
  <div class="w dd" style="top:209.2px">
    <svg style="position:absolute;left:4px;top:2px" width="14" height="14" viewBox="0 0 14 14"><path d="M0.5 12.5 C3.5 12.5 4.2 1.8 7 1.8 C9.8 1.8 10.5 12.5 13.5 12.5" stroke="#dcdcdc" stroke-width="1" fill="none"/></svg>
    <div class="wt" style="left:25px;top:2px">Smooth</div>
    <svg class="chev" viewBox="0 0 10 8"><path d="M1.8 2.3 L4.9 5.4 L8 2.3" stroke="#dcdcdc" stroke-width="1.25" fill="none"/></svg></div>
</div>
<div id="bar">
  <div style="position:absolute;left:-5px;top:2.9px;width:64px;height:20px;background:#2b2b2b;border:1px solid #3c3c3c;border-radius:4px 4px 0 0;box-sizing:border-box"></div>
  <div style="position:absolute;left:58.3px;top:2.9px;width:60.7px;height:20px;background:#2b2b2b;border:1px solid #3c3c3c;border-radius:4px 4px 0 0;box-sizing:border-box"></div>
  <div class="bt" style="left:-1px">Playback</div>
  <div class="bt" style="left:67px">Keying</div>
  <div class="bt" style="left:129px">View</div>
  <div class="bt" style="left:171px">Marker</div>
  <div style="position:absolute;left:642.7px;top:3.3px;width:38.3px;height:20px;background:#3c3c3c;border-radius:4px;overflow:hidden">
    <div style="position:absolute;left:19.3px;top:0;width:19px;height:20px;background:#292929"></div>
    <div style="position:absolute;left:4.5px;top:2.8px;width:9px;height:9px;border:1.3px solid #cfcfcf;border-radius:50%;box-sizing:border-box"></div>
  </div>
  <div style="position:absolute;left:688px;top:3.3px;width:117.8px;height:20px;background:#3c3c3c;border-radius:4px;overflow:hidden">
    <div style="position:absolute;left:18.5px;top:0;width:1px;height:20px;background:#2e2e2e"></div>
    <div style="position:absolute;left:38.6px;top:0;width:1px;height:20px;background:#2e2e2e"></div>
    <div style="position:absolute;left:58.7px;top:0;width:1px;height:20px;background:#2e2e2e"></div>
    <div style="position:absolute;left:78.7px;top:0;width:1px;height:20px;background:#2e2e2e"></div>
    <div style="position:absolute;left:98.6px;top:0;width:1px;height:20px;background:#2e2e2e"></div>
    <svg style="position:absolute;left:0;top:1px" width="118" height="20" viewBox="0 0 118 20">
      <g fill="#d8d8d8" stroke="#d8d8d8">
        <path d="M5 3.5V12" stroke-width="1.4"/><path d="M11 3.5L6.5 7.5L11 11.5Z" stroke="none"/>
        <path d="M23.5 3.5V12M33 3.5V12" stroke-width="1.2"/><path d="M28.2 3L31 7.5L28.2 12L25.4 7.5Z" stroke="none"/>
        <path d="M53 3.2L45 7.8L53 12.4Z" stroke="none"/>
        <path d="M64.5 3.2L72.5 7.8L64.5 12.4Z" stroke="none"/>
        <path d="M83.5 3.5V12M93 3.5V12" stroke-width="1.2"/><path d="M88.2 3L91 7.5L88.2 12L85.4 7.5Z" stroke="none"/>
        <path d="M112.5 3.5V12" stroke-width="1.4"/><path d="M106.5 3.5L111 7.5L106.5 11.5Z" stroke="none"/>
      </g>
    </svg>
  </div>
</div>
</body></html>
